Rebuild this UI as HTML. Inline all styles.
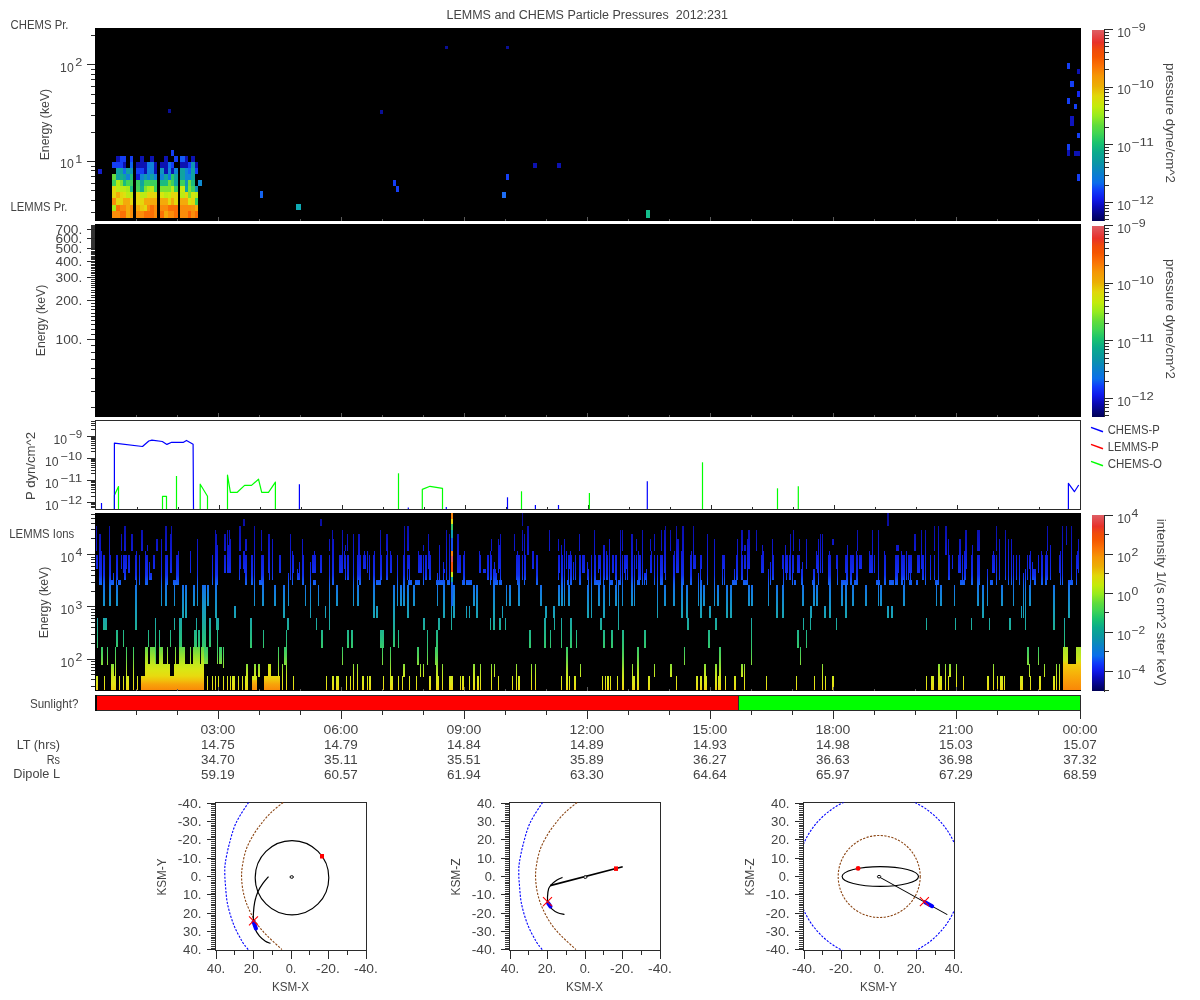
<!DOCTYPE html>
<html><head><meta charset="utf-8"><title>LEMMS and CHEMS Particle Pressures 2012:231</title>
<style>html,body{margin:0;padding:0;background:#fff;}svg{display:block;}text{font-family:"Liberation Sans",sans-serif;}</style></head><body>
<svg width="1200" height="1000" viewBox="0 0 1200 1000" shape-rendering="crispEdges">
<defs>
<linearGradient id="cb" x1="0" y1="0" x2="0" y2="1"><stop offset="0.000" stop-color="rgb(222,95,100)"/><stop offset="0.040" stop-color="rgb(228,65,65)"/><stop offset="0.065" stop-color="rgb(232,50,40)"/><stop offset="0.105" stop-color="rgb(240,75,10)"/><stop offset="0.140" stop-color="rgb(245,85,0)"/><stop offset="0.190" stop-color="rgb(250,115,5)"/><stop offset="0.240" stop-color="rgb(245,150,5)"/><stop offset="0.295" stop-color="rgb(235,175,5)"/><stop offset="0.345" stop-color="rgb(225,215,10)"/><stop offset="0.400" stop-color="rgb(195,235,10)"/><stop offset="0.450" stop-color="rgb(150,235,30)"/><stop offset="0.500" stop-color="rgb(95,220,60)"/><stop offset="0.540" stop-color="rgb(65,213,82)"/><stop offset="0.590" stop-color="rgb(25,195,110)"/><stop offset="0.640" stop-color="rgb(10,170,140)"/><stop offset="0.695" stop-color="rgb(10,150,165)"/><stop offset="0.745" stop-color="rgb(10,130,200)"/><stop offset="0.800" stop-color="rgb(10,110,235)"/><stop offset="0.840" stop-color="rgb(15,60,250)"/><stop offset="0.885" stop-color="rgb(15,25,235)"/><stop offset="0.925" stop-color="rgb(10,10,185)"/><stop offset="0.965" stop-color="rgb(5,5,130)"/><stop offset="1.000" stop-color="rgb(0,0,85)"/></linearGradient>
<linearGradient id="g4" gradientUnits="userSpaceOnUse" x1="0" y1="513" x2="0" y2="690"><stop offset="0.0000" stop-color="rgb(8,10,140)"/><stop offset="0.0734" stop-color="rgb(10,15,170)"/><stop offset="0.1525" stop-color="rgb(12,20,195)"/><stop offset="0.2373" stop-color="rgb(15,28,218)"/><stop offset="0.3503" stop-color="rgb(18,48,238)"/><stop offset="0.3785" stop-color="rgb(20,78,245)"/><stop offset="0.4068" stop-color="rgb(20,105,240)"/><stop offset="0.4350" stop-color="rgb(20,122,228)"/><stop offset="0.4915" stop-color="rgb(20,140,210)"/><stop offset="0.5254" stop-color="rgb(22,150,200)"/><stop offset="0.5593" stop-color="rgb(24,160,188)"/><stop offset="0.6271" stop-color="rgb(28,172,160)"/><stop offset="0.6723" stop-color="rgb(32,182,140)"/><stop offset="0.7175" stop-color="rgb(40,192,125)"/><stop offset="0.7627" stop-color="rgb(55,202,105)"/><stop offset="0.8079" stop-color="rgb(85,212,85)"/><stop offset="0.8531" stop-color="rgb(130,222,60)"/><stop offset="0.8870" stop-color="rgb(175,228,40)"/><stop offset="0.9209" stop-color="rgb(205,232,30)"/><stop offset="0.9661" stop-color="rgb(228,228,22)"/><stop offset="1.0000" stop-color="rgb(238,208,18)"/></linearGradient>
<linearGradient id="h4" gradientUnits="userSpaceOnUse" x1="0" y1="630" x2="0" y2="690"><stop offset="0.0000" stop-color="rgb(60,200,100)"/><stop offset="0.2833" stop-color="rgb(95,215,75)"/><stop offset="0.4333" stop-color="rgb(150,225,45)"/><stop offset="0.5667" stop-color="rgb(195,232,28)"/><stop offset="0.6667" stop-color="rgb(218,230,20)"/><stop offset="0.7667" stop-color="rgb(232,218,15)"/><stop offset="0.8333" stop-color="rgb(240,195,12)"/><stop offset="0.9000" stop-color="rgb(247,165,10)"/><stop offset="1.0000" stop-color="rgb(250,138,8)"/></linearGradient>
<linearGradient id="r4" gradientUnits="userSpaceOnUse" x1="0" y1="647" x2="0" y2="690"><stop offset="0.0000" stop-color="rgb(165,228,42)"/><stop offset="0.3023" stop-color="rgb(205,230,25)"/><stop offset="0.3953" stop-color="rgb(240,205,12)"/><stop offset="0.5814" stop-color="rgb(246,182,10)"/><stop offset="0.7674" stop-color="rgb(249,160,9)"/><stop offset="1.0000" stop-color="rgb(250,135,8)"/></linearGradient>
</defs>
<rect x="0" y="0" width="1200" height="1000" fill="#fff"/>
<rect x="95" y="28" width="986" height="193" fill="#000"/>
<rect x="91.00" y="212.00" width="4.00" height="1" fill="#2b2b2b"/>
<rect x="91.00" y="200.00" width="4.00" height="1" fill="#2b2b2b"/>
<rect x="91.00" y="190.00" width="4.00" height="1" fill="#2b2b2b"/>
<rect x="91.00" y="183.00" width="4.00" height="1" fill="#2b2b2b"/>
<rect x="91.00" y="176.00" width="4.00" height="1" fill="#2b2b2b"/>
<rect x="91.00" y="170.00" width="4.00" height="1" fill="#2b2b2b"/>
<rect x="91.00" y="166.00" width="4.00" height="1" fill="#2b2b2b"/>
<rect x="87.00" y="161.00" width="8.00" height="1" fill="#2b2b2b"/>
<rect x="91.00" y="132.00" width="4.00" height="1" fill="#2b2b2b"/>
<rect x="91.00" y="115.00" width="4.00" height="1" fill="#2b2b2b"/>
<rect x="91.00" y="103.00" width="4.00" height="1" fill="#2b2b2b"/>
<rect x="91.00" y="94.00" width="4.00" height="1" fill="#2b2b2b"/>
<rect x="91.00" y="86.00" width="4.00" height="1" fill="#2b2b2b"/>
<rect x="91.00" y="79.00" width="4.00" height="1" fill="#2b2b2b"/>
<rect x="91.00" y="74.00" width="4.00" height="1" fill="#2b2b2b"/>
<rect x="91.00" y="69.00" width="4.00" height="1" fill="#2b2b2b"/>
<rect x="87.00" y="64.00" width="8.00" height="1" fill="#2b2b2b"/>
<rect x="91.00" y="35.00" width="4.00" height="1" fill="#2b2b2b"/>
<rect x="136.00" y="219.00" width="1" height="2.00" fill="#5a5a5a"/>
<rect x="177.00" y="219.00" width="1" height="2.00" fill="#5a5a5a"/>
<rect x="218.00" y="217.00" width="1" height="4.00" fill="#5a5a5a"/>
<rect x="259.00" y="219.00" width="1" height="2.00" fill="#5a5a5a"/>
<rect x="300.00" y="219.00" width="1" height="2.00" fill="#5a5a5a"/>
<rect x="341.00" y="217.00" width="1" height="4.00" fill="#5a5a5a"/>
<rect x="382.00" y="219.00" width="1" height="2.00" fill="#5a5a5a"/>
<rect x="423.00" y="219.00" width="1" height="2.00" fill="#5a5a5a"/>
<rect x="464.00" y="217.00" width="1" height="4.00" fill="#5a5a5a"/>
<rect x="505.00" y="219.00" width="1" height="2.00" fill="#5a5a5a"/>
<rect x="546.00" y="219.00" width="1" height="2.00" fill="#5a5a5a"/>
<rect x="587.00" y="217.00" width="1" height="4.00" fill="#5a5a5a"/>
<rect x="628.00" y="219.00" width="1" height="2.00" fill="#5a5a5a"/>
<rect x="669.00" y="219.00" width="1" height="2.00" fill="#5a5a5a"/>
<rect x="710.00" y="217.00" width="1" height="4.00" fill="#5a5a5a"/>
<rect x="751.00" y="219.00" width="1" height="2.00" fill="#5a5a5a"/>
<rect x="792.00" y="219.00" width="1" height="2.00" fill="#5a5a5a"/>
<rect x="833.00" y="217.00" width="1" height="4.00" fill="#5a5a5a"/>
<rect x="874.00" y="219.00" width="1" height="2.00" fill="#5a5a5a"/>
<rect x="915.00" y="219.00" width="1" height="2.00" fill="#5a5a5a"/>
<rect x="956.00" y="217.00" width="1" height="4.00" fill="#5a5a5a"/>
<rect x="997.00" y="219.00" width="1" height="2.00" fill="#5a5a5a"/>
<rect x="1038.00" y="219.00" width="1" height="2.00" fill="#5a5a5a"/>
<rect x="112" y="211" width="4" height="7" fill="rgb(250,140,10)"/>
<rect x="116" y="211" width="4" height="7" fill="rgb(250,140,10)"/>
<rect x="120" y="211" width="3" height="7" fill="rgb(250,112,5)"/>
<rect x="123" y="211" width="3" height="7" fill="rgb(250,112,5)"/>
<rect x="126" y="211" width="4" height="7" fill="rgb(244,170,10)"/>
<rect x="130" y="211" width="3" height="7" fill="rgb(250,140,10)"/>
<rect x="112" y="205" width="4" height="6" fill="rgb(170,235,20)"/>
<rect x="116" y="205" width="4" height="6" fill="rgb(250,112,5)"/>
<rect x="120" y="205" width="3" height="6" fill="rgb(250,140,10)"/>
<rect x="123" y="205" width="3" height="6" fill="rgb(250,140,10)"/>
<rect x="126" y="205" width="4" height="6" fill="rgb(244,170,10)"/>
<rect x="130" y="205" width="3" height="6" fill="rgb(250,140,10)"/>
<rect x="112" y="198" width="4" height="7" fill="rgb(250,140,10)"/>
<rect x="116" y="198" width="4" height="7" fill="rgb(228,215,12)"/>
<rect x="120" y="198" width="3" height="7" fill="rgb(228,215,12)"/>
<rect x="123" y="198" width="3" height="7" fill="rgb(244,170,10)"/>
<rect x="126" y="198" width="4" height="7" fill="rgb(244,170,10)"/>
<rect x="130" y="198" width="3" height="7" fill="rgb(228,215,12)"/>
<rect x="112" y="192" width="4" height="6" fill="rgb(228,215,12)"/>
<rect x="116" y="192" width="4" height="6" fill="rgb(244,170,10)"/>
<rect x="120" y="192" width="3" height="6" fill="rgb(228,215,12)"/>
<rect x="123" y="192" width="3" height="6" fill="rgb(220,225,15)"/>
<rect x="126" y="192" width="4" height="6" fill="rgb(188,235,20)"/>
<rect x="130" y="192" width="3" height="6" fill="rgb(188,235,20)"/>
<rect x="112" y="186" width="4" height="6" fill="rgb(230,215,10)"/>
<rect x="116" y="186" width="4" height="6" fill="rgb(188,235,20)"/>
<rect x="120" y="186" width="3" height="6" fill="rgb(188,235,20)"/>
<rect x="123" y="186" width="3" height="6" fill="rgb(188,235,20)"/>
<rect x="126" y="186" width="4" height="6" fill="rgb(170,235,25)"/>
<rect x="130" y="186" width="3" height="6" fill="rgb(26,187,128)"/>
<rect x="112" y="180" width="4" height="6" fill="rgb(60,208,92)"/>
<rect x="116" y="180" width="4" height="6" fill="rgb(180,235,20)"/>
<rect x="120" y="180" width="3" height="6" fill="rgb(125,226,48)"/>
<rect x="123" y="180" width="3" height="6" fill="rgb(26,187,128)"/>
<rect x="126" y="180" width="4" height="6" fill="rgb(70,215,80)"/>
<rect x="130" y="180" width="3" height="6" fill="rgb(60,208,92)"/>
<rect x="112" y="174" width="4" height="6" fill="rgb(100,220,60)"/>
<rect x="116" y="174" width="4" height="6" fill="rgb(16,163,160)"/>
<rect x="120" y="174" width="3" height="6" fill="rgb(20,175,140)"/>
<rect x="123" y="174" width="3" height="6" fill="rgb(16,163,160)"/>
<rect x="126" y="174" width="4" height="6" fill="rgb(15,132,215)"/>
<rect x="130" y="174" width="3" height="6" fill="rgb(26,187,128)"/>
<rect x="116" y="168" width="4" height="6" fill="rgb(16,163,160)"/>
<rect x="120" y="168" width="3" height="6" fill="rgb(16,163,160)"/>
<rect x="123" y="168" width="3" height="6" fill="rgb(20,110,235)"/>
<rect x="126" y="168" width="4" height="6" fill="rgb(16,163,160)"/>
<rect x="130" y="168" width="3" height="6" fill="rgb(15,150,185)"/>
<rect x="112" y="162" width="4" height="6" fill="rgb(20,62,245)"/>
<rect x="116" y="162" width="4" height="6" fill="rgb(20,62,245)"/>
<rect x="120" y="162" width="3" height="6" fill="rgb(20,62,245)"/>
<rect x="123" y="162" width="3" height="6" fill="rgb(12,18,178)"/>
<rect x="130" y="162" width="3" height="6" fill="rgb(15,100,240)"/>
<rect x="116" y="156" width="4" height="6" fill="rgb(12,18,178)"/>
<rect x="120" y="156" width="3" height="6" fill="rgb(20,62,245)"/>
<rect x="123" y="156" width="3" height="6" fill="rgb(20,62,245)"/>
<rect x="130" y="156" width="3" height="6" fill="rgb(20,62,245)"/>
<rect x="136" y="211" width="4" height="7" fill="rgb(250,140,10)"/>
<rect x="140" y="211" width="4" height="7" fill="rgb(250,140,10)"/>
<rect x="144" y="211" width="3" height="7" fill="rgb(250,112,5)"/>
<rect x="147" y="211" width="3" height="7" fill="rgb(250,112,5)"/>
<rect x="150" y="211" width="4" height="7" fill="rgb(250,112,5)"/>
<rect x="154" y="211" width="3" height="7" fill="rgb(250,140,10)"/>
<rect x="136" y="205" width="4" height="6" fill="rgb(244,170,10)"/>
<rect x="140" y="205" width="4" height="6" fill="rgb(235,200,10)"/>
<rect x="144" y="205" width="3" height="6" fill="rgb(228,215,12)"/>
<rect x="147" y="205" width="3" height="6" fill="rgb(250,140,10)"/>
<rect x="150" y="205" width="4" height="6" fill="rgb(250,112,5)"/>
<rect x="154" y="205" width="3" height="6" fill="rgb(250,140,10)"/>
<rect x="136" y="198" width="4" height="7" fill="rgb(228,215,12)"/>
<rect x="140" y="198" width="4" height="7" fill="rgb(228,215,12)"/>
<rect x="144" y="198" width="3" height="7" fill="rgb(244,170,10)"/>
<rect x="147" y="198" width="3" height="7" fill="rgb(244,170,10)"/>
<rect x="150" y="198" width="4" height="7" fill="rgb(244,170,10)"/>
<rect x="154" y="198" width="3" height="7" fill="rgb(244,170,10)"/>
<rect x="136" y="192" width="4" height="6" fill="rgb(228,215,12)"/>
<rect x="140" y="192" width="4" height="6" fill="rgb(188,235,20)"/>
<rect x="144" y="192" width="3" height="6" fill="rgb(188,235,20)"/>
<rect x="147" y="192" width="3" height="6" fill="rgb(228,215,12)"/>
<rect x="150" y="192" width="4" height="6" fill="rgb(228,215,12)"/>
<rect x="154" y="192" width="3" height="6" fill="rgb(228,215,12)"/>
<rect x="136" y="186" width="4" height="6" fill="rgb(70,210,85)"/>
<rect x="140" y="186" width="4" height="6" fill="rgb(20,175,140)"/>
<rect x="144" y="186" width="3" height="6" fill="rgb(125,226,48)"/>
<rect x="147" y="186" width="3" height="6" fill="rgb(170,235,25)"/>
<rect x="150" y="186" width="4" height="6" fill="rgb(188,235,20)"/>
<rect x="154" y="186" width="3" height="6" fill="rgb(60,208,92)"/>
<rect x="136" y="180" width="4" height="6" fill="rgb(60,208,92)"/>
<rect x="140" y="180" width="4" height="6" fill="rgb(16,163,160)"/>
<rect x="144" y="180" width="3" height="6" fill="rgb(60,208,92)"/>
<rect x="147" y="180" width="3" height="6" fill="rgb(60,208,92)"/>
<rect x="150" y="180" width="4" height="6" fill="rgb(60,208,92)"/>
<rect x="154" y="180" width="3" height="6" fill="rgb(60,208,92)"/>
<rect x="136" y="174" width="4" height="6" fill="rgb(15,25,215)"/>
<rect x="140" y="174" width="4" height="6" fill="rgb(15,132,215)"/>
<rect x="144" y="174" width="3" height="6" fill="rgb(15,155,175)"/>
<rect x="147" y="174" width="3" height="6" fill="rgb(15,132,215)"/>
<rect x="150" y="174" width="4" height="6" fill="rgb(16,163,160)"/>
<rect x="154" y="174" width="3" height="6" fill="rgb(15,132,215)"/>
<rect x="136" y="168" width="4" height="6" fill="rgb(20,62,245)"/>
<rect x="140" y="168" width="4" height="6" fill="rgb(20,62,245)"/>
<rect x="144" y="168" width="3" height="6" fill="rgb(12,18,178)"/>
<rect x="147" y="168" width="3" height="6" fill="rgb(15,130,220)"/>
<rect x="150" y="168" width="4" height="6" fill="rgb(15,132,215)"/>
<rect x="154" y="168" width="3" height="6" fill="rgb(12,18,178)"/>
<rect x="136" y="162" width="4" height="6" fill="rgb(12,18,178)"/>
<rect x="140" y="162" width="4" height="6" fill="rgb(12,18,178)"/>
<rect x="144" y="162" width="3" height="6" fill="rgb(12,18,178)"/>
<rect x="147" y="162" width="3" height="6" fill="rgb(15,120,230)"/>
<rect x="150" y="162" width="4" height="6" fill="rgb(15,132,215)"/>
<rect x="154" y="162" width="3" height="6" fill="rgb(12,18,178)"/>
<rect x="140" y="156" width="4" height="6" fill="rgb(12,18,178)"/>
<rect x="150" y="156" width="4" height="6" fill="rgb(12,18,178)"/>
<rect x="160" y="211" width="4" height="7" fill="rgb(250,112,5)"/>
<rect x="164" y="211" width="4" height="7" fill="rgb(244,170,10)"/>
<rect x="168" y="211" width="3" height="7" fill="rgb(250,140,10)"/>
<rect x="171" y="211" width="3" height="7" fill="rgb(250,140,10)"/>
<rect x="174" y="211" width="4" height="7" fill="rgb(250,112,5)"/>
<rect x="160" y="205" width="4" height="6" fill="rgb(250,140,10)"/>
<rect x="164" y="205" width="4" height="6" fill="rgb(250,140,10)"/>
<rect x="168" y="205" width="3" height="6" fill="rgb(250,112,5)"/>
<rect x="171" y="205" width="3" height="6" fill="rgb(250,112,5)"/>
<rect x="174" y="205" width="4" height="6" fill="rgb(250,112,5)"/>
<rect x="160" y="198" width="4" height="7" fill="rgb(244,170,10)"/>
<rect x="164" y="198" width="4" height="7" fill="rgb(244,170,10)"/>
<rect x="168" y="198" width="3" height="7" fill="rgb(228,215,12)"/>
<rect x="171" y="198" width="3" height="7" fill="rgb(244,170,10)"/>
<rect x="174" y="198" width="4" height="7" fill="rgb(228,215,12)"/>
<rect x="160" y="192" width="4" height="6" fill="rgb(215,230,15)"/>
<rect x="164" y="192" width="4" height="6" fill="rgb(188,235,20)"/>
<rect x="168" y="192" width="3" height="6" fill="rgb(200,235,15)"/>
<rect x="171" y="192" width="3" height="6" fill="rgb(228,215,12)"/>
<rect x="174" y="192" width="4" height="6" fill="rgb(228,215,12)"/>
<rect x="160" y="186" width="4" height="6" fill="rgb(125,226,48)"/>
<rect x="164" y="186" width="4" height="6" fill="rgb(125,226,48)"/>
<rect x="168" y="186" width="3" height="6" fill="rgb(125,226,48)"/>
<rect x="171" y="186" width="3" height="6" fill="rgb(188,235,20)"/>
<rect x="174" y="186" width="4" height="6" fill="rgb(60,208,92)"/>
<rect x="160" y="180" width="4" height="6" fill="rgb(26,187,128)"/>
<rect x="164" y="180" width="4" height="6" fill="rgb(26,187,128)"/>
<rect x="168" y="180" width="3" height="6" fill="rgb(110,220,55)"/>
<rect x="171" y="180" width="3" height="6" fill="rgb(60,208,92)"/>
<rect x="174" y="180" width="4" height="6" fill="rgb(16,163,160)"/>
<rect x="160" y="174" width="4" height="6" fill="rgb(15,132,215)"/>
<rect x="164" y="174" width="4" height="6" fill="rgb(16,163,160)"/>
<rect x="168" y="174" width="3" height="6" fill="rgb(15,120,225)"/>
<rect x="171" y="174" width="3" height="6" fill="rgb(40,200,105)"/>
<rect x="174" y="174" width="4" height="6" fill="rgb(16,163,160)"/>
<rect x="160" y="168" width="4" height="6" fill="rgb(15,150,190)"/>
<rect x="164" y="168" width="4" height="6" fill="rgb(12,18,178)"/>
<rect x="168" y="168" width="3" height="6" fill="rgb(15,132,215)"/>
<rect x="171" y="168" width="3" height="6" fill="rgb(12,18,178)"/>
<rect x="174" y="168" width="4" height="6" fill="rgb(15,130,215)"/>
<rect x="160" y="162" width="4" height="6" fill="rgb(12,18,178)"/>
<rect x="164" y="162" width="4" height="6" fill="rgb(12,18,178)"/>
<rect x="168" y="162" width="3" height="6" fill="rgb(15,115,230)"/>
<rect x="171" y="162" width="3" height="6" fill="rgb(20,62,245)"/>
<rect x="164" y="156" width="4" height="6" fill="rgb(12,18,178)"/>
<rect x="174" y="156" width="4" height="6" fill="rgb(20,62,245)"/>
<rect x="171" y="150" width="3" height="6" fill="rgb(20,62,245)"/>
<rect x="180" y="211" width="5" height="7" fill="rgb(250,140,10)"/>
<rect x="185" y="211" width="3" height="7" fill="rgb(250,140,10)"/>
<rect x="188" y="211" width="3" height="7" fill="rgb(250,100,5)"/>
<rect x="191" y="211" width="4" height="7" fill="rgb(250,140,10)"/>
<rect x="195" y="211" width="3" height="7" fill="rgb(250,112,5)"/>
<rect x="180" y="205" width="5" height="6" fill="rgb(250,140,10)"/>
<rect x="185" y="205" width="3" height="6" fill="rgb(250,140,10)"/>
<rect x="188" y="205" width="3" height="6" fill="rgb(250,140,10)"/>
<rect x="191" y="205" width="4" height="6" fill="rgb(245,150,10)"/>
<rect x="195" y="205" width="3" height="6" fill="rgb(244,170,10)"/>
<rect x="180" y="198" width="5" height="7" fill="rgb(244,170,10)"/>
<rect x="185" y="198" width="3" height="7" fill="rgb(244,170,10)"/>
<rect x="188" y="198" width="3" height="7" fill="rgb(215,230,15)"/>
<rect x="191" y="198" width="4" height="7" fill="rgb(228,215,12)"/>
<rect x="195" y="198" width="3" height="7" fill="rgb(60,208,92)"/>
<rect x="180" y="192" width="5" height="6" fill="rgb(188,235,20)"/>
<rect x="185" y="192" width="3" height="6" fill="rgb(228,215,12)"/>
<rect x="188" y="192" width="3" height="6" fill="rgb(125,226,48)"/>
<rect x="191" y="192" width="4" height="6" fill="rgb(210,230,15)"/>
<rect x="195" y="192" width="3" height="6" fill="rgb(188,235,20)"/>
<rect x="180" y="186" width="5" height="6" fill="rgb(200,235,15)"/>
<rect x="185" y="186" width="3" height="6" fill="rgb(16,163,160)"/>
<rect x="188" y="186" width="3" height="6" fill="rgb(125,226,48)"/>
<rect x="191" y="186" width="4" height="6" fill="rgb(60,208,92)"/>
<rect x="195" y="186" width="3" height="6" fill="rgb(15,150,180)"/>
<rect x="180" y="180" width="5" height="6" fill="rgb(60,208,92)"/>
<rect x="185" y="180" width="3" height="6" fill="rgb(15,150,180)"/>
<rect x="188" y="180" width="3" height="6" fill="rgb(110,220,55)"/>
<rect x="191" y="180" width="4" height="6" fill="rgb(26,187,128)"/>
<rect x="198" y="180" width="4" height="6" fill="rgb(15,140,210)"/>
<rect x="180" y="174" width="5" height="6" fill="rgb(16,163,160)"/>
<rect x="185" y="174" width="3" height="6" fill="rgb(15,132,215)"/>
<rect x="188" y="174" width="3" height="6" fill="rgb(15,132,215)"/>
<rect x="191" y="174" width="4" height="6" fill="rgb(16,163,160)"/>
<rect x="180" y="168" width="5" height="6" fill="rgb(16,163,160)"/>
<rect x="185" y="168" width="3" height="6" fill="rgb(15,132,215)"/>
<rect x="188" y="168" width="3" height="6" fill="rgb(20,100,240)"/>
<rect x="191" y="168" width="4" height="6" fill="rgb(16,163,160)"/>
<rect x="195" y="168" width="3" height="6" fill="rgb(20,62,245)"/>
<rect x="180" y="162" width="5" height="6" fill="rgb(12,18,178)"/>
<rect x="185" y="162" width="3" height="6" fill="rgb(12,18,178)"/>
<rect x="188" y="162" width="3" height="6" fill="rgb(20,62,245)"/>
<rect x="191" y="162" width="4" height="6" fill="rgb(15,150,180)"/>
<rect x="195" y="162" width="3" height="6" fill="rgb(12,18,178)"/>
<rect x="180" y="156" width="5" height="6" fill="rgb(20,90,245)"/>
<rect x="185" y="156" width="3" height="6" fill="rgb(12,18,178)"/>
<rect x="191" y="156" width="4" height="6" fill="rgb(12,18,178)"/>
<rect x="98" y="169" width="4" height="5" fill="rgb(20,30,200)"/>
<rect x="168" y="109" width="3" height="4" fill="rgb(10,15,150)"/>
<rect x="260" y="191" width="3" height="7" fill="rgb(20,100,240)"/>
<rect x="296" y="204" width="5" height="6" fill="rgb(15,170,180)"/>
<rect x="380" y="110" width="3" height="4" fill="rgb(10,15,150)"/>
<rect x="393" y="180" width="3" height="6" fill="rgb(20,62,245)"/>
<rect x="396" y="186" width="3" height="6" fill="rgb(20,62,245)"/>
<rect x="445" y="46" width="3" height="3" fill="rgb(10,15,150)"/>
<rect x="506" y="46" width="3" height="3" fill="rgb(10,15,150)"/>
<rect x="506" y="174" width="3" height="6" fill="rgb(20,62,245)"/>
<rect x="502" y="192" width="4" height="6" fill="rgb(30,110,245)"/>
<rect x="533" y="163" width="4" height="5" fill="rgb(12,18,178)"/>
<rect x="557" y="163" width="4" height="5" fill="rgb(12,18,178)"/>
<rect x="646" y="210" width="4" height="8" fill="rgb(20,190,140)"/>
<rect x="1067" y="63" width="3" height="6" fill="rgb(20,62,245)"/>
<rect x="1077" y="69" width="3" height="5" fill="rgb(12,18,178)"/>
<rect x="1070" y="81" width="4" height="6" fill="rgb(20,62,245)"/>
<rect x="1077" y="91" width="3" height="6" fill="rgb(20,40,240)"/>
<rect x="1067" y="98" width="3" height="6" fill="rgb(20,62,245)"/>
<rect x="1074" y="104" width="3" height="5" fill="rgb(20,62,245)"/>
<rect x="1070" y="116" width="4" height="10" fill="rgb(15,20,190)"/>
<rect x="1077" y="133" width="3" height="5" fill="rgb(20,62,245)"/>
<rect x="1067" y="144" width="3" height="6" fill="rgb(20,62,245)"/>
<rect x="1067" y="150" width="3" height="6" fill="rgb(12,18,178)"/>
<rect x="1074" y="151" width="6" height="5" fill="rgb(12,18,178)"/>
<rect x="1077" y="174" width="3" height="7" fill="rgb(20,62,245)"/>
<rect x="1092" y="30" width="12.5" height="191" fill="url(#cb)"/>
<rect x="1104.00" y="29.00" width="1" height="192.00" fill="#2b2b2b"/>
<rect x="1105.00" y="29.00" width="8.00" height="1" fill="#2b2b2b"/>
<rect x="1105.00" y="69.00" width="4.00" height="1" fill="#2b2b2b"/>
<rect x="1105.00" y="59.00" width="4.00" height="1" fill="#2b2b2b"/>
<rect x="1105.00" y="52.00" width="4.00" height="1" fill="#2b2b2b"/>
<rect x="1105.00" y="46.00" width="4.00" height="1" fill="#2b2b2b"/>
<rect x="1105.00" y="42.00" width="4.00" height="1" fill="#2b2b2b"/>
<rect x="1105.00" y="38.00" width="4.00" height="1" fill="#2b2b2b"/>
<rect x="1105.00" y="35.00" width="4.00" height="1" fill="#2b2b2b"/>
<rect x="1105.00" y="32.00" width="4.00" height="1" fill="#2b2b2b"/>
<rect x="1105.00" y="87.00" width="8.00" height="1" fill="#2b2b2b"/>
<rect x="1105.00" y="127.00" width="4.00" height="1" fill="#2b2b2b"/>
<rect x="1105.00" y="117.00" width="4.00" height="1" fill="#2b2b2b"/>
<rect x="1105.00" y="110.00" width="4.00" height="1" fill="#2b2b2b"/>
<rect x="1105.00" y="104.00" width="4.00" height="1" fill="#2b2b2b"/>
<rect x="1105.00" y="100.00" width="4.00" height="1" fill="#2b2b2b"/>
<rect x="1105.00" y="96.00" width="4.00" height="1" fill="#2b2b2b"/>
<rect x="1105.00" y="92.00" width="4.00" height="1" fill="#2b2b2b"/>
<rect x="1105.00" y="89.00" width="4.00" height="1" fill="#2b2b2b"/>
<rect x="1105.00" y="144.00" width="8.00" height="1" fill="#2b2b2b"/>
<rect x="1105.00" y="185.00" width="4.00" height="1" fill="#2b2b2b"/>
<rect x="1105.00" y="175.00" width="4.00" height="1" fill="#2b2b2b"/>
<rect x="1105.00" y="167.00" width="4.00" height="1" fill="#2b2b2b"/>
<rect x="1105.00" y="162.00" width="4.00" height="1" fill="#2b2b2b"/>
<rect x="1105.00" y="157.00" width="4.00" height="1" fill="#2b2b2b"/>
<rect x="1105.00" y="153.00" width="4.00" height="1" fill="#2b2b2b"/>
<rect x="1105.00" y="150.00" width="4.00" height="1" fill="#2b2b2b"/>
<rect x="1105.00" y="147.00" width="4.00" height="1" fill="#2b2b2b"/>
<rect x="1105.00" y="202.00" width="8.00" height="1" fill="#2b2b2b"/>
<rect x="1105.00" y="219.00" width="4.00" height="1" fill="#2b2b2b"/>
<rect x="1105.00" y="215.00" width="4.00" height="1" fill="#2b2b2b"/>
<rect x="1105.00" y="211.00" width="4.00" height="1" fill="#2b2b2b"/>
<rect x="1105.00" y="208.00" width="4.00" height="1" fill="#2b2b2b"/>
<rect x="1105.00" y="205.00" width="4.00" height="1" fill="#2b2b2b"/>
<rect x="1092" y="226" width="12.5" height="191" fill="url(#cb)"/>
<rect x="1104.00" y="225.00" width="1" height="192.00" fill="#2b2b2b"/>
<rect x="1105.00" y="225.00" width="8.00" height="1" fill="#2b2b2b"/>
<rect x="1105.00" y="265.00" width="4.00" height="1" fill="#2b2b2b"/>
<rect x="1105.00" y="255.00" width="4.00" height="1" fill="#2b2b2b"/>
<rect x="1105.00" y="248.00" width="4.00" height="1" fill="#2b2b2b"/>
<rect x="1105.00" y="242.00" width="4.00" height="1" fill="#2b2b2b"/>
<rect x="1105.00" y="238.00" width="4.00" height="1" fill="#2b2b2b"/>
<rect x="1105.00" y="234.00" width="4.00" height="1" fill="#2b2b2b"/>
<rect x="1105.00" y="231.00" width="4.00" height="1" fill="#2b2b2b"/>
<rect x="1105.00" y="228.00" width="4.00" height="1" fill="#2b2b2b"/>
<rect x="1105.00" y="283.00" width="8.00" height="1" fill="#2b2b2b"/>
<rect x="1105.00" y="323.00" width="4.00" height="1" fill="#2b2b2b"/>
<rect x="1105.00" y="313.00" width="4.00" height="1" fill="#2b2b2b"/>
<rect x="1105.00" y="306.00" width="4.00" height="1" fill="#2b2b2b"/>
<rect x="1105.00" y="300.00" width="4.00" height="1" fill="#2b2b2b"/>
<rect x="1105.00" y="296.00" width="4.00" height="1" fill="#2b2b2b"/>
<rect x="1105.00" y="292.00" width="4.00" height="1" fill="#2b2b2b"/>
<rect x="1105.00" y="288.00" width="4.00" height="1" fill="#2b2b2b"/>
<rect x="1105.00" y="285.00" width="4.00" height="1" fill="#2b2b2b"/>
<rect x="1105.00" y="340.00" width="8.00" height="1" fill="#2b2b2b"/>
<rect x="1105.00" y="381.00" width="4.00" height="1" fill="#2b2b2b"/>
<rect x="1105.00" y="371.00" width="4.00" height="1" fill="#2b2b2b"/>
<rect x="1105.00" y="363.00" width="4.00" height="1" fill="#2b2b2b"/>
<rect x="1105.00" y="358.00" width="4.00" height="1" fill="#2b2b2b"/>
<rect x="1105.00" y="353.00" width="4.00" height="1" fill="#2b2b2b"/>
<rect x="1105.00" y="349.00" width="4.00" height="1" fill="#2b2b2b"/>
<rect x="1105.00" y="346.00" width="4.00" height="1" fill="#2b2b2b"/>
<rect x="1105.00" y="343.00" width="4.00" height="1" fill="#2b2b2b"/>
<rect x="1105.00" y="398.00" width="8.00" height="1" fill="#2b2b2b"/>
<rect x="1105.00" y="415.00" width="4.00" height="1" fill="#2b2b2b"/>
<rect x="1105.00" y="411.00" width="4.00" height="1" fill="#2b2b2b"/>
<rect x="1105.00" y="407.00" width="4.00" height="1" fill="#2b2b2b"/>
<rect x="1105.00" y="404.00" width="4.00" height="1" fill="#2b2b2b"/>
<rect x="1105.00" y="401.00" width="4.00" height="1" fill="#2b2b2b"/>
<rect x="95" y="224" width="986" height="192.7" fill="#000"/>
<rect x="91" y="225" width="4" height="24" fill="#333"/>
<rect x="91.00" y="407.00" width="4.00" height="1" fill="#2b2b2b"/>
<rect x="91.00" y="391.00" width="4.00" height="1" fill="#2b2b2b"/>
<rect x="91.00" y="378.00" width="4.00" height="1" fill="#2b2b2b"/>
<rect x="91.00" y="368.00" width="4.00" height="1" fill="#2b2b2b"/>
<rect x="91.00" y="359.00" width="4.00" height="1" fill="#2b2b2b"/>
<rect x="91.00" y="352.00" width="4.00" height="1" fill="#2b2b2b"/>
<rect x="91.00" y="345.00" width="4.00" height="1" fill="#2b2b2b"/>
<rect x="87.00" y="339.00" width="8.00" height="1" fill="#2b2b2b"/>
<rect x="91.00" y="334.00" width="4.00" height="1" fill="#2b2b2b"/>
<rect x="91.00" y="329.00" width="4.00" height="1" fill="#2b2b2b"/>
<rect x="91.00" y="324.00" width="4.00" height="1" fill="#2b2b2b"/>
<rect x="91.00" y="320.00" width="4.00" height="1" fill="#2b2b2b"/>
<rect x="91.00" y="316.00" width="4.00" height="1" fill="#2b2b2b"/>
<rect x="91.00" y="313.00" width="4.00" height="1" fill="#2b2b2b"/>
<rect x="91.00" y="309.00" width="4.00" height="1" fill="#2b2b2b"/>
<rect x="91.00" y="306.00" width="4.00" height="1" fill="#2b2b2b"/>
<rect x="91.00" y="303.00" width="4.00" height="1" fill="#2b2b2b"/>
<rect x="87.00" y="300.00" width="8.00" height="1" fill="#2b2b2b"/>
<rect x="91.00" y="297.00" width="4.00" height="1" fill="#2b2b2b"/>
<rect x="91.00" y="295.00" width="4.00" height="1" fill="#2b2b2b"/>
<rect x="91.00" y="292.00" width="4.00" height="1" fill="#2b2b2b"/>
<rect x="91.00" y="290.00" width="4.00" height="1" fill="#2b2b2b"/>
<rect x="91.00" y="287.00" width="4.00" height="1" fill="#2b2b2b"/>
<rect x="91.00" y="285.00" width="4.00" height="1" fill="#2b2b2b"/>
<rect x="91.00" y="283.00" width="4.00" height="1" fill="#2b2b2b"/>
<rect x="91.00" y="281.00" width="4.00" height="1" fill="#2b2b2b"/>
<rect x="91.00" y="279.00" width="4.00" height="1" fill="#2b2b2b"/>
<rect x="87.00" y="277.00" width="8.00" height="1" fill="#2b2b2b"/>
<rect x="91.00" y="275.00" width="4.00" height="1" fill="#2b2b2b"/>
<rect x="91.00" y="273.00" width="4.00" height="1" fill="#2b2b2b"/>
<rect x="91.00" y="272.00" width="4.00" height="1" fill="#2b2b2b"/>
<rect x="91.00" y="270.00" width="4.00" height="1" fill="#2b2b2b"/>
<rect x="91.00" y="268.00" width="4.00" height="1" fill="#2b2b2b"/>
<rect x="91.00" y="267.00" width="4.00" height="1" fill="#2b2b2b"/>
<rect x="91.00" y="265.00" width="4.00" height="1" fill="#2b2b2b"/>
<rect x="91.00" y="264.00" width="4.00" height="1" fill="#2b2b2b"/>
<rect x="91.00" y="262.00" width="4.00" height="1" fill="#2b2b2b"/>
<rect x="87.00" y="261.00" width="8.00" height="1" fill="#2b2b2b"/>
<rect x="91.00" y="259.00" width="4.00" height="1" fill="#2b2b2b"/>
<rect x="91.00" y="258.00" width="4.00" height="1" fill="#2b2b2b"/>
<rect x="91.00" y="257.00" width="4.00" height="1" fill="#2b2b2b"/>
<rect x="91.00" y="256.00" width="4.00" height="1" fill="#2b2b2b"/>
<rect x="91.00" y="254.00" width="4.00" height="1" fill="#2b2b2b"/>
<rect x="91.00" y="253.00" width="4.00" height="1" fill="#2b2b2b"/>
<rect x="91.00" y="252.00" width="4.00" height="1" fill="#2b2b2b"/>
<rect x="91.00" y="251.00" width="4.00" height="1" fill="#2b2b2b"/>
<rect x="91.00" y="249.00" width="4.00" height="1" fill="#2b2b2b"/>
<rect x="87.00" y="248.00" width="8.00" height="1" fill="#2b2b2b"/>
<rect x="87.00" y="238.00" width="8.00" height="1" fill="#2b2b2b"/>
<rect x="87.00" y="229.00" width="8.00" height="1" fill="#2b2b2b"/>
<rect x="136.00" y="414.70" width="1" height="2.00" fill="#5a5a5a"/>
<rect x="177.00" y="414.70" width="1" height="2.00" fill="#5a5a5a"/>
<rect x="218.00" y="412.70" width="1" height="4.00" fill="#5a5a5a"/>
<rect x="259.00" y="414.70" width="1" height="2.00" fill="#5a5a5a"/>
<rect x="300.00" y="414.70" width="1" height="2.00" fill="#5a5a5a"/>
<rect x="341.00" y="412.70" width="1" height="4.00" fill="#5a5a5a"/>
<rect x="382.00" y="414.70" width="1" height="2.00" fill="#5a5a5a"/>
<rect x="423.00" y="414.70" width="1" height="2.00" fill="#5a5a5a"/>
<rect x="464.00" y="412.70" width="1" height="4.00" fill="#5a5a5a"/>
<rect x="505.00" y="414.70" width="1" height="2.00" fill="#5a5a5a"/>
<rect x="546.00" y="414.70" width="1" height="2.00" fill="#5a5a5a"/>
<rect x="587.00" y="412.70" width="1" height="4.00" fill="#5a5a5a"/>
<rect x="628.00" y="414.70" width="1" height="2.00" fill="#5a5a5a"/>
<rect x="669.00" y="414.70" width="1" height="2.00" fill="#5a5a5a"/>
<rect x="710.00" y="412.70" width="1" height="4.00" fill="#5a5a5a"/>
<rect x="751.00" y="414.70" width="1" height="2.00" fill="#5a5a5a"/>
<rect x="792.00" y="414.70" width="1" height="2.00" fill="#5a5a5a"/>
<rect x="833.00" y="412.70" width="1" height="4.00" fill="#5a5a5a"/>
<rect x="874.00" y="414.70" width="1" height="2.00" fill="#5a5a5a"/>
<rect x="915.00" y="414.70" width="1" height="2.00" fill="#5a5a5a"/>
<rect x="956.00" y="412.70" width="1" height="4.00" fill="#5a5a5a"/>
<rect x="997.00" y="414.70" width="1" height="2.00" fill="#5a5a5a"/>
<rect x="1038.00" y="414.70" width="1" height="2.00" fill="#5a5a5a"/>
<rect x="95.5" y="420.5" width="985" height="89" fill="#fff" stroke="#2b2b2b" stroke-width="1"/>
<rect x="87.00" y="436.00" width="8.00" height="1" fill="#2b2b2b"/>
<rect x="87.00" y="458.00" width="8.00" height="1" fill="#2b2b2b"/>
<rect x="87.00" y="480.00" width="8.00" height="1" fill="#2b2b2b"/>
<rect x="87.00" y="502.00" width="8.00" height="1" fill="#2b2b2b"/>
<rect x="91.00" y="429.00" width="4.00" height="1" fill="#2b2b2b"/>
<rect x="91.00" y="425.00" width="4.00" height="1" fill="#2b2b2b"/>
<rect x="91.00" y="423.00" width="4.00" height="1" fill="#2b2b2b"/>
<rect x="91.00" y="421.00" width="4.00" height="1" fill="#2b2b2b"/>
<rect x="91.00" y="451.00" width="4.00" height="1" fill="#2b2b2b"/>
<rect x="91.00" y="448.00" width="4.00" height="1" fill="#2b2b2b"/>
<rect x="91.00" y="445.00" width="4.00" height="1" fill="#2b2b2b"/>
<rect x="91.00" y="443.00" width="4.00" height="1" fill="#2b2b2b"/>
<rect x="91.00" y="441.00" width="4.00" height="1" fill="#2b2b2b"/>
<rect x="91.00" y="439.00" width="4.00" height="1" fill="#2b2b2b"/>
<rect x="91.00" y="438.00" width="4.00" height="1" fill="#2b2b2b"/>
<rect x="91.00" y="437.00" width="4.00" height="1" fill="#2b2b2b"/>
<rect x="91.00" y="473.00" width="4.00" height="1" fill="#2b2b2b"/>
<rect x="91.00" y="470.00" width="4.00" height="1" fill="#2b2b2b"/>
<rect x="91.00" y="467.00" width="4.00" height="1" fill="#2b2b2b"/>
<rect x="91.00" y="465.00" width="4.00" height="1" fill="#2b2b2b"/>
<rect x="91.00" y="463.00" width="4.00" height="1" fill="#2b2b2b"/>
<rect x="91.00" y="461.00" width="4.00" height="1" fill="#2b2b2b"/>
<rect x="91.00" y="460.00" width="4.00" height="1" fill="#2b2b2b"/>
<rect x="91.00" y="459.00" width="4.00" height="1" fill="#2b2b2b"/>
<rect x="91.00" y="496.00" width="4.00" height="1" fill="#2b2b2b"/>
<rect x="91.00" y="492.00" width="4.00" height="1" fill="#2b2b2b"/>
<rect x="91.00" y="489.00" width="4.00" height="1" fill="#2b2b2b"/>
<rect x="91.00" y="487.00" width="4.00" height="1" fill="#2b2b2b"/>
<rect x="91.00" y="485.00" width="4.00" height="1" fill="#2b2b2b"/>
<rect x="91.00" y="484.00" width="4.00" height="1" fill="#2b2b2b"/>
<rect x="91.00" y="482.00" width="4.00" height="1" fill="#2b2b2b"/>
<rect x="91.00" y="481.00" width="4.00" height="1" fill="#2b2b2b"/>
<rect x="91.00" y="507.00" width="4.00" height="1" fill="#2b2b2b"/>
<rect x="91.00" y="506.00" width="4.00" height="1" fill="#2b2b2b"/>
<rect x="91.00" y="504.00" width="4.00" height="1" fill="#2b2b2b"/>
<rect x="91.00" y="503.00" width="4.00" height="1" fill="#2b2b2b"/>
<rect x="137.00" y="507.00" width="1" height="2.00" fill="#2b2b2b"/>
<rect x="178.00" y="507.00" width="1" height="2.00" fill="#2b2b2b"/>
<rect x="219.00" y="505.00" width="1" height="4.00" fill="#2b2b2b"/>
<rect x="260.00" y="507.00" width="1" height="2.00" fill="#2b2b2b"/>
<rect x="301.00" y="507.00" width="1" height="2.00" fill="#2b2b2b"/>
<rect x="342.00" y="505.00" width="1" height="4.00" fill="#2b2b2b"/>
<rect x="383.00" y="507.00" width="1" height="2.00" fill="#2b2b2b"/>
<rect x="424.00" y="507.00" width="1" height="2.00" fill="#2b2b2b"/>
<rect x="465.00" y="505.00" width="1" height="4.00" fill="#2b2b2b"/>
<rect x="506.00" y="507.00" width="1" height="2.00" fill="#2b2b2b"/>
<rect x="547.00" y="507.00" width="1" height="2.00" fill="#2b2b2b"/>
<rect x="588.00" y="505.00" width="1" height="4.00" fill="#2b2b2b"/>
<rect x="629.00" y="507.00" width="1" height="2.00" fill="#2b2b2b"/>
<rect x="670.00" y="507.00" width="1" height="2.00" fill="#2b2b2b"/>
<rect x="711.00" y="505.00" width="1" height="4.00" fill="#2b2b2b"/>
<rect x="752.00" y="507.00" width="1" height="2.00" fill="#2b2b2b"/>
<rect x="793.00" y="507.00" width="1" height="2.00" fill="#2b2b2b"/>
<rect x="834.00" y="505.00" width="1" height="4.00" fill="#2b2b2b"/>
<rect x="875.00" y="507.00" width="1" height="2.00" fill="#2b2b2b"/>
<rect x="916.00" y="507.00" width="1" height="2.00" fill="#2b2b2b"/>
<rect x="957.00" y="505.00" width="1" height="4.00" fill="#2b2b2b"/>
<rect x="998.00" y="507.00" width="1" height="2.00" fill="#2b2b2b"/>
<rect x="1039.00" y="507.00" width="1" height="2.00" fill="#2b2b2b"/>
<path d="M114.4 509.0 L114.4 495.2 L118.5 486.5 L118.5 509.0" fill="none" stroke="#00ff00" stroke-width="1.2" shape-rendering="auto" stroke-linejoin="round"/>
<path d="M162.5 509.0 L162.5 496.3 L166.5 496.3 L166.5 509.0" fill="none" stroke="#00ff00" stroke-width="1.2" shape-rendering="auto" stroke-linejoin="round"/>
<path d="M176.5 509.0 L176.5 476.0" fill="none" stroke="#00ff00" stroke-width="1.2" shape-rendering="auto" stroke-linejoin="round"/>
<path d="M200.2 509.0 L200.2 484.2 L207.5 496.3 L207.5 509.0" fill="none" stroke="#00ff00" stroke-width="1.2" shape-rendering="auto" stroke-linejoin="round"/>
<path d="M227.5 509.0 L227.5 475.0 L230.4 492.3 L237.3 492.3 L244.6 485.4 L251.5 485.4 L258.5 479.2 L261.7 492.3 L268.5 492.3 L275.4 482.1 L275.4 509.0" fill="none" stroke="#00ff00" stroke-width="1.2" shape-rendering="auto" stroke-linejoin="round"/>
<path d="M398.5 509.0 L398.5 473.3" fill="none" stroke="#00ff00" stroke-width="1.2" shape-rendering="auto" stroke-linejoin="round"/>
<path d="M422.3 509.0 L422.3 489.4 L430.0 486.3 L442.5 488.3 L442.5 509.0" fill="none" stroke="#00ff00" stroke-width="1.2" shape-rendering="auto" stroke-linejoin="round"/>
<path d="M521.5 509.0 L521.5 491.3" fill="none" stroke="#00ff00" stroke-width="1.2" shape-rendering="auto" stroke-linejoin="round"/>
<path d="M589.4 509.0 L589.4 493.1" fill="none" stroke="#00ff00" stroke-width="1.2" shape-rendering="auto" stroke-linejoin="round"/>
<path d="M702.5 509.0 L702.5 462.3" fill="none" stroke="#00ff00" stroke-width="1.2" shape-rendering="auto" stroke-linejoin="round"/>
<path d="M777.5 509.0 L777.5 488.3" fill="none" stroke="#00ff00" stroke-width="1.2" shape-rendering="auto" stroke-linejoin="round"/>
<path d="M798.3 509.0 L798.3 486.3" fill="none" stroke="#00ff00" stroke-width="1.2" shape-rendering="auto" stroke-linejoin="round"/>
<path d="M114.4 509.0 L114.4 443.1 L142.5 446.5 L148.8 441.0 L151.9 440.2 L162.3 441.5 L166.9 444.4 L171.7 442.3 L183.5 442.3 L186.5 440.4 L193.1 444.2 L193.5 509.0" fill="none" stroke="#0000ff" stroke-width="1.2" shape-rendering="auto" stroke-linejoin="round"/>
<path d="M101.5 509.0 L101.5 503.0" fill="none" stroke="#0000ff" stroke-width="1.2" shape-rendering="auto" stroke-linejoin="round"/>
<path d="M299.4 509.0 L299.4 484.2" fill="none" stroke="#0000ff" stroke-width="1.2" shape-rendering="auto" stroke-linejoin="round"/>
<path d="M408.3 509.0 L408.3 507.5" fill="none" stroke="#0000ff" stroke-width="1.2" shape-rendering="auto" stroke-linejoin="round"/>
<path d="M446.3 509.0 L446.3 507.0" fill="none" stroke="#0000ff" stroke-width="1.2" shape-rendering="auto" stroke-linejoin="round"/>
<path d="M507.5 509.0 L507.5 497.3" fill="none" stroke="#0000ff" stroke-width="1.2" shape-rendering="auto" stroke-linejoin="round"/>
<path d="M535.4 509.0 L535.4 505.0" fill="none" stroke="#0000ff" stroke-width="1.2" shape-rendering="auto" stroke-linejoin="round"/>
<path d="M558.5 509.0 L558.5 505.0" fill="none" stroke="#0000ff" stroke-width="1.2" shape-rendering="auto" stroke-linejoin="round"/>
<path d="M647.3 509.0 L647.3 481.3" fill="none" stroke="#0000ff" stroke-width="1.2" shape-rendering="auto" stroke-linejoin="round"/>
<path d="M1068.4 509.0 L1068.4 483.3 L1074.4 491.7 L1078.7 485.0" fill="none" stroke="#0000ff" stroke-width="1.2" shape-rendering="auto" stroke-linejoin="round"/>
<path d="M1091 427.4 L1103 431.8" stroke="#0000ff" stroke-width="1.5" shape-rendering="auto"/>
<path d="M1091 444.4 L1103 448.8" stroke="#ff0000" stroke-width="1.5" shape-rendering="auto"/>
<path d="M1091 461.4 L1103 465.8" stroke="#00ff00" stroke-width="1.5" shape-rendering="auto"/>
<rect x="95" y="513" width="986" height="178" fill="#000"/>
<rect x="87.00" y="659.00" width="8.00" height="1" fill="#2b2b2b"/>
<rect x="87.00" y="606.00" width="8.00" height="1" fill="#2b2b2b"/>
<rect x="87.00" y="554.00" width="8.00" height="1" fill="#2b2b2b"/>
<rect x="91.00" y="686.00" width="4.00" height="1" fill="#2b2b2b"/>
<rect x="91.00" y="679.00" width="4.00" height="1" fill="#2b2b2b"/>
<rect x="91.00" y="674.00" width="4.00" height="1" fill="#2b2b2b"/>
<rect x="91.00" y="670.00" width="4.00" height="1" fill="#2b2b2b"/>
<rect x="91.00" y="667.00" width="4.00" height="1" fill="#2b2b2b"/>
<rect x="91.00" y="664.00" width="4.00" height="1" fill="#2b2b2b"/>
<rect x="91.00" y="661.00" width="4.00" height="1" fill="#2b2b2b"/>
<rect x="91.00" y="643.00" width="4.00" height="1" fill="#2b2b2b"/>
<rect x="91.00" y="634.00" width="4.00" height="1" fill="#2b2b2b"/>
<rect x="91.00" y="627.00" width="4.00" height="1" fill="#2b2b2b"/>
<rect x="91.00" y="622.00" width="4.00" height="1" fill="#2b2b2b"/>
<rect x="91.00" y="618.00" width="4.00" height="1" fill="#2b2b2b"/>
<rect x="91.00" y="615.00" width="4.00" height="1" fill="#2b2b2b"/>
<rect x="91.00" y="612.00" width="4.00" height="1" fill="#2b2b2b"/>
<rect x="91.00" y="609.00" width="4.00" height="1" fill="#2b2b2b"/>
<rect x="91.00" y="591.00" width="4.00" height="1" fill="#2b2b2b"/>
<rect x="91.00" y="582.00" width="4.00" height="1" fill="#2b2b2b"/>
<rect x="91.00" y="575.00" width="4.00" height="1" fill="#2b2b2b"/>
<rect x="91.00" y="570.00" width="4.00" height="1" fill="#2b2b2b"/>
<rect x="91.00" y="566.00" width="4.00" height="1" fill="#2b2b2b"/>
<rect x="91.00" y="562.00" width="4.00" height="1" fill="#2b2b2b"/>
<rect x="91.00" y="559.00" width="4.00" height="1" fill="#2b2b2b"/>
<rect x="91.00" y="557.00" width="4.00" height="1" fill="#2b2b2b"/>
<rect x="91.00" y="538.00" width="4.00" height="1" fill="#2b2b2b"/>
<rect x="91.00" y="529.00" width="4.00" height="1" fill="#2b2b2b"/>
<rect x="91.00" y="523.00" width="4.00" height="1" fill="#2b2b2b"/>
<rect x="91.00" y="518.00" width="4.00" height="1" fill="#2b2b2b"/>
<rect x="91.00" y="514.00" width="4.00" height="1" fill="#2b2b2b"/>
<path d="M96 676h2v14h-2zM104 676h1v14h-1zM111 676h5v14h-5zM119 676h1v14h-1zM123 676h1v14h-1zM126 676h3v14h-3zM133 676h1v14h-1zM137 676h1v14h-1zM207 676h1v14h-1zM212 676h1v14h-1zM215 676h1v14h-1zM218 676h1v14h-1zM223 676h1v14h-1zM227 676h1v14h-1zM230 676h1v14h-1zM232 676h3v14h-3zM238 676h1v14h-1zM242 676h1v14h-1zM245 676h3v14h-3zM252 676h5v14h-5zM293 676h1v14h-1zM326 676h1v14h-1zM332 676h2v14h-2zM336 676h3v14h-3zM346 676h1v14h-1zM350 676h1v14h-1zM362 676h2v14h-2zM367 676h1v14h-1zM369 676h2v14h-2zM383 676h1v14h-1zM390 676h3v14h-3zM398 676h1v14h-1zM402 676h1v14h-1zM409 676h1v14h-1zM416 676h1v14h-1zM429 676h2v14h-2zM438 676h1v14h-1zM449 676h4v14h-4zM460 676h1v14h-1zM462 676h2v14h-2zM469 676h1v14h-1zM477 676h2v14h-2zM498 676h1v14h-1zM512 676h1v14h-1zM518 676h2v14h-2zM561 676h1v14h-1zM569 676h1v14h-1zM574 676h2v14h-2zM602 676h1v14h-1zM605 676h1v14h-1zM607 676h2v14h-2zM610 676h1v14h-1zM617 676h1v14h-1zM632 676h3v14h-3zM648 676h2v14h-2zM676 676h1v14h-1zM696 676h2v14h-2zM700 676h2v14h-2zM704 676h3v14h-3zM718 676h3v14h-3zM725 676h1v14h-1zM734 676h2v14h-2zM766 676h1v14h-1zM796 676h1v14h-1zM814 676h1v14h-1zM825 676h1v14h-1zM832 676h2v14h-2zM926 676h1v14h-1zM931 676h3v14h-3zM938 676h4v14h-4zM948 676h1v14h-1zM963 676h1v14h-1zM987 676h2v14h-2zM997 676h1v14h-1zM1000 676h3v14h-3zM1004 676h1v14h-1zM1020 676h3v14h-3zM1030 676h1v14h-1zM1039 676h2v14h-2zM1053 676h2v14h-2zM111 664h3v12h-3zM246 664h2v12h-2zM254 664h2v12h-2zM258 664h2v13h-2zM278 647h1v43h-1zM282 664h1v26h-1zM284 647h2v18h-2zM286 630h1v60h-1zM287 618h2v12h-2zM353 664h1v26h-1zM357 664h1v26h-1zM390 647h1v29h-1zM403 664h2v13h-2zM420 664h1v13h-1zM423 664h1v13h-1zM436 630h2v60h-2zM442 664h1v26h-1zM473 664h2v26h-2zM480 664h1v26h-1zM491 664h1v26h-1zM494 664h1v13h-1zM516 664h1v26h-1zM531 664h1v26h-1zM535 664h1v26h-1zM566 647h2v43h-2zM622 630h2v60h-2zM632 664h1v12h-1zM637 647h2v43h-2zM580 664h1v13h-1zM654 664h1v13h-1zM670 664h2v13h-2zM684 647h1v18h-1zM704 664h2v12h-2zM715 664h2v26h-2zM719 647h2v29h-2zM744 664h1v26h-1zM822 664h1v26h-1zM741 664h2v13h-2zM938 664h2v12h-2zM945 664h1v26h-1zM949 664h2v13h-2zM956 664h1v26h-1zM993 664h1v26h-1zM1029 664h1v13h-1zM1027 647h2v18h-2zM1044 664h1v13h-1zM1056 664h1v26h-1zM1059 664h1v26h-1zM1064 618h1v29h-1zM1038 647h1v18h-1zM97 618h1v30h-1zM101 647h2v18h-2zM103 618h4v12h-4zM107 647h1v18h-1zM115 647h1v29h-1zM116 630h2v17h-2zM123 630h1v17h-1zM126 647h1v29h-1zM133 647h1v43h-1zM148 630h1v17h-1zM155 618h1v46h-1zM159 630h1v17h-1zM170 630h1v17h-1zM174 618h1v12h-1zM179 618h3v29h-3zM196 618h1v12h-1zM194 630h3v34h-3zM198 630h2v34h-2zM202 585h4v79h-4zM206 647h2v17h-2zM209 618h2v29h-2zM216 618h3v12h-3zM217 630h1v34h-1zM219 647h3v17h-3zM223 647h1v21h-1zM250 618h2v30h-2zM263 630h1v18h-1zM316 618h1v12h-1zM321 630h2v18h-2zM342 647h1v18h-1zM347 630h2v18h-2zM351 630h2v18h-2zM380 630h2v18h-2zM382 630h1v35h-1zM383 630h1v18h-1zM394 618h1v12h-1zM398 630h1v18h-1zM417 647h2v18h-2zM423 618h2v12h-2zM427 630h1v35h-1zM435 647h1v18h-1zM438 618h2v12h-2zM490 618h1v12h-1zM499 618h2v12h-2zM505 618h1v12h-1zM529 630h2v18h-2zM544 618h2v30h-2zM550 630h1v18h-1zM554 618h1v12h-1zM561 618h1v30h-1zM570 618h2v30h-2zM576 630h1v18h-1zM600 618h2v12h-2zM603 630h2v18h-2zM611 630h2v18h-2zM644 630h2v18h-2zM687 618h2v12h-2zM708 630h2v18h-2zM715 618h2v12h-2zM751 618h1v47h-1zM797 630h2v18h-2zM800 647h1v18h-1zM803 618h1v12h-1zM806 630h1v18h-1zM810 618h1v12h-1zM836 618h1v12h-1zM926 618h1v12h-1zM955 618h1v12h-1zM971 618h1v12h-1zM989 618h1v12h-1zM1009 618h2v12h-2zM96 555h1v14h-1zM97 555h1v14h-1zM96 526h1v25h-1zM99 555h1v30h-1zM100 555h1v30h-1zM101 551h1v34h-1zM99 534h2v21h-2zM103 555h1v30h-1zM104 555h1v30h-1zM103 585h2v21h-2zM109 551h1v34h-1zM110 555h1v30h-1zM109 585h2v21h-2zM109 526h1v29h-1zM113 573h1v12h-1zM116 555h1v30h-1zM117 555h1v25h-1zM116 585h2v21h-2zM121 555h1v14h-1zM121 534h1v17h-1zM123 555h1v18h-1zM124 555h1v25h-1zM125 555h1v25h-1zM126 555h1v14h-1zM124 526h2v25h-2zM128 555h1v18h-1zM129 555h1v18h-1zM131 534h2v17h-2zM135 555h1v25h-1zM136 551h1v34h-1zM135 585h2v45h-2zM139 555h1v30h-1zM141 530h2v21h-2zM145 551h1v34h-1zM146 555h1v30h-1zM147 555h1v30h-1zM147 545h1v6h-1zM149 562h1v18h-1zM150 573h1v7h-1zM151 573h1v7h-1zM153 555h1v14h-1zM154 555h1v14h-1zM156 539h2v12h-2zM161 555h1v30h-1zM161 585h1v21h-1zM161 539h1v16h-1zM165 555h1v30h-1zM166 555h1v30h-1zM167 555h1v30h-1zM165 585h2v21h-2zM165 526h2v25h-2zM170 534h1v39h-1zM171 526h1v47h-1zM174 585h1v21h-1zM176 555h1v30h-1zM177 555h1v30h-1zM178 551h1v34h-1zM182 585h2v33h-2zM185 585h2v33h-2zM190 551h1v22h-1zM193 585h2v21h-2zM197 551h1v34h-1zM197 585h1v21h-1zM197 539h1v16h-1zM202 585h2v45h-2zM207 585h2v21h-2zM212 555h1v30h-1zM215 530h1v55h-1zM216 534h1v51h-1zM217 545h1v40h-1zM215 585h2v33h-2zM224 555h1v18h-1zM225 555h1v18h-1zM224 534h2v17h-2zM227 530h1v43h-1zM228 545h1v28h-1zM229 530h1v43h-1zM230 539h1v34h-1zM234 606h2v12h-2zM239 555h1v25h-1zM240 555h1v14h-1zM239 526h2v25h-2zM243 551h1v18h-1zM244 551h1v22h-1zM245 555h1v30h-1zM246 555h1v30h-1zM245 539h2v12h-2zM243 519h2v7h-2zM251 555h1v30h-1zM252 555h1v30h-1zM254 526h1v59h-1zM254 585h1v21h-1zM261 555h1v25h-1zM262 555h1v30h-1zM263 555h1v30h-1zM262 585h2v21h-2zM261 530h1v21h-1zM268 534h1v39h-1zM269 534h1v46h-1zM272 551h1v29h-1zM272 539h1v16h-1zM274 585h2v21h-2zM279 555h1v18h-1zM280 555h1v18h-1zM283 585h2v33h-2zM288 573h1v12h-1zM288 585h1v21h-1zM290 534h1v46h-1zM292 551h1v34h-1zM293 555h1v18h-1zM297 569h1v11h-1zM298 573h1v7h-1zM299 562h1v18h-1zM302 551h1v34h-1zM303 555h1v30h-1zM302 539h1v16h-1zM305 585h1v21h-1zM310 562h1v23h-1zM310 585h1v33h-1zM312 555h1v18h-1zM313 555h1v18h-1zM314 551h1v22h-1zM315 555h1v18h-1zM318 585h1v21h-1zM320 555h1v18h-1zM321 555h1v18h-1zM320 519h2v7h-2zM325 606h1v12h-1zM329 555h1v30h-1zM329 585h1v45h-1zM329 539h1v12h-1zM332 530h1v55h-1zM333 539h1v46h-1zM336 585h2v21h-2zM339 555h1v18h-1zM340 555h1v18h-1zM341 555h1v18h-1zM342 555h1v18h-1zM342 530h1v25h-1zM344 551h1v18h-1zM345 555h1v25h-1zM345 545h1v6h-1zM347 555h1v25h-1zM348 555h1v25h-1zM347 534h1v17h-1zM353 551h1v34h-1zM353 585h1v21h-1zM353 534h1v17h-1zM357 555h1v30h-1zM358 555h1v25h-1zM359 555h1v30h-1zM360 555h1v30h-1zM357 585h2v21h-2zM358 534h2v21h-2zM363 555h1v14h-1zM364 551h1v18h-1zM365 555h1v14h-1zM367 551h1v22h-1zM369 555h1v25h-1zM373 555h1v30h-1zM374 551h1v34h-1zM373 585h2v33h-2zM376 606h2v12h-2zM380 555h1v25h-1zM381 555h1v25h-1zM380 530h1v25h-1zM386 555h1v25h-1zM387 551h1v29h-1zM386 534h2v17h-2zM390 551h1v22h-1zM391 555h1v18h-1zM393 585h2v62h-2zM397 555h1v30h-1zM397 585h1v21h-1zM400 585h2v21h-2zM403 555h1v30h-1zM404 551h1v34h-1zM403 585h2v21h-2zM404 526h1v29h-1zM407 555h1v25h-1zM408 555h1v14h-1zM409 555h1v30h-1zM407 585h2v33h-2zM407 526h2v25h-2zM413 585h2v21h-2zM418 551h1v22h-1zM419 555h1v18h-1zM420 555h1v18h-1zM421 555h1v18h-1zM423 555h1v30h-1zM423 545h1v6h-1zM425 555h1v25h-1zM426 555h1v25h-1zM428 555h1v14h-1zM429 551h1v29h-1zM430 555h1v25h-1zM428 534h1v21h-1zM437 573h1v12h-1zM437 585h1v21h-1zM439 545h1v40h-1zM443 562h1v23h-1zM444 569h1v4h-1zM443 585h2v33h-2zM446 551h1v29h-1zM446 530h1v21h-1zM449 555h1v30h-1zM449 534h1v21h-1zM451 585h1v45h-1zM453 585h2v33h-2zM457 551h1v22h-1zM458 555h1v18h-1zM459 555h1v18h-1zM460 555h1v18h-1zM457 534h2v21h-2zM463 555h1v25h-1zM464 551h1v29h-1zM466 606h1v12h-1zM469 606h1v12h-1zM473 585h2v21h-2zM476 585h2v33h-2zM479 551h1v22h-1zM480 555h1v18h-1zM483 569h1v4h-1zM484 569h1v4h-1zM485 569h1v4h-1zM487 555h1v25h-1zM488 555h1v25h-1zM490 551h1v34h-1zM491 555h1v25h-1zM491 539h1v12h-1zM493 569h1v16h-1zM494 562h1v23h-1zM495 569h1v16h-1zM496 573h1v7h-1zM493 585h2v45h-2zM498 539h1v34h-1zM499 545h1v24h-1zM500 534h1v46h-1zM502 606h1v12h-1zM506 585h1v21h-1zM509 585h2v21h-2zM514 534h1v17h-1zM516 555h1v25h-1zM517 551h1v34h-1zM518 555h1v30h-1zM519 555h1v30h-1zM518 585h2v21h-2zM522 555h1v25h-1zM522 530h1v21h-1zM522 513h1v13h-1zM524 551h1v34h-1zM525 555h1v25h-1zM524 534h1v17h-1zM527 526h2v29h-2zM532 551h1v18h-1zM533 551h1v18h-1zM536 555h1v30h-1zM537 555h1v30h-1zM540 585h2v21h-2zM545 606h2v12h-2zM549 530h1v21h-1zM553 606h2v12h-2zM558 555h1v25h-1zM559 555h1v18h-1zM558 585h2v21h-2zM558 539h1v12h-1zM561 555h1v30h-1zM562 555h1v30h-1zM561 585h2v21h-2zM561 545h1v10h-1zM564 551h1v34h-1zM564 585h1v21h-1zM564 539h1v16h-1zM566 551h1v18h-1zM568 555h1v30h-1zM569 555h1v14h-1zM570 551h1v34h-1zM571 555h1v30h-1zM568 585h2v21h-2zM573 562h1v18h-1zM575 555h1v25h-1zM579 555h1v30h-1zM580 555h1v30h-1zM579 534h1v17h-1zM582 555h1v18h-1zM583 555h1v18h-1zM584 555h1v18h-1zM587 562h1v18h-1zM588 569h1v16h-1zM587 585h2v33h-2zM591 555h1v30h-1zM591 585h1v33h-1zM594 551h1v34h-1zM595 555h1v30h-1zM594 530h1v21h-1zM598 555h1v18h-1zM599 555h1v14h-1zM600 555h1v30h-1zM598 585h2v21h-2zM603 555h1v30h-1zM604 555h1v25h-1zM603 585h2v33h-2zM603 545h2v10h-2zM606 551h1v29h-1zM607 555h1v25h-1zM609 555h1v30h-1zM609 585h1v21h-1zM609 539h1v16h-1zM612 555h1v18h-1zM613 555h1v18h-1zM615 555h1v25h-1zM616 555h1v30h-1zM615 585h2v21h-2zM618 585h1v45h-1zM620 530h1v50h-1zM622 555h1v30h-1zM622 585h1v21h-1zM622 530h1v21h-1zM624 555h1v18h-1zM625 555h1v25h-1zM626 555h1v14h-1zM627 555h1v25h-1zM631 555h1v30h-1zM632 555h1v30h-1zM631 585h2v21h-2zM631 534h2v21h-2zM634 555h1v30h-1zM634 585h1v21h-1zM636 555h1v14h-1zM636 539h1v12h-1zM638 551h1v29h-1zM639 555h1v25h-1zM640 555h1v25h-1zM642 555h1v30h-1zM642 530h1v25h-1zM644 573h1v12h-1zM645 573h1v7h-1zM646 569h1v16h-1zM650 555h1v18h-1zM651 551h1v22h-1zM650 539h1v12h-1zM654 555h1v30h-1zM654 534h1v17h-1zM657 555h1v30h-1zM657 585h1v33h-1zM660 555h1v30h-1zM661 555h1v30h-1zM662 555h1v30h-1zM661 530h1v21h-1zM664 530h1v43h-1zM665 526h1v54h-1zM664 585h2v21h-2zM670 530h1v21h-1zM673 555h1v30h-1zM674 551h1v34h-1zM673 585h2v21h-2zM676 526h1v47h-1zM677 539h1v34h-1zM678 539h1v34h-1zM681 551h1v34h-1zM682 551h1v34h-1zM683 555h1v30h-1zM681 585h2v33h-2zM682 526h2v29h-2zM686 585h2v33h-2zM690 555h1v30h-1zM691 551h1v34h-1zM693 555h1v14h-1zM694 555h1v14h-1zM695 555h1v14h-1zM693 526h1v29h-1zM698 573h1v12h-1zM698 585h1v21h-1zM700 555h1v30h-1zM701 555h1v14h-1zM700 585h2v33h-2zM703 585h2v21h-2zM707 555h1v30h-1zM707 534h1v21h-1zM709 606h2v12h-2zM714 539h1v46h-1zM714 585h1v21h-1zM717 585h2v21h-2zM722 555h1v30h-1zM723 555h1v14h-1zM724 555h1v30h-1zM726 585h2v33h-2zM730 585h2v33h-2zM734 569h1v11h-1zM736 555h1v25h-1zM737 555h1v25h-1zM737 539h1v16h-1zM741 551h1v29h-1zM742 555h1v25h-1zM741 530h2v21h-2zM744 555h1v14h-1zM745 555h1v14h-1zM744 545h2v6h-2zM747 539h1v46h-1zM748 530h1v39h-1zM749 530h1v39h-1zM748 585h2v21h-2zM751 585h2v21h-2zM756 530h1v21h-1zM761 555h1v18h-1zM762 555h1v18h-1zM763 551h1v22h-1zM762 545h1v10h-1zM768 569h1v16h-1zM768 585h1v21h-1zM770 562h1v23h-1zM772 555h1v25h-1zM773 555h1v25h-1zM772 539h1v16h-1zM776 585h2v33h-2zM782 555h1v14h-1zM783 555h1v30h-1zM782 585h2v33h-2zM785 551h1v22h-1zM786 555h1v25h-1zM787 555h1v18h-1zM785 545h1v10h-1zM789 555h1v25h-1zM790 555h1v25h-1zM790 534h1v21h-1zM792 555h1v30h-1zM793 555h1v18h-1zM793 530h1v21h-1zM797 555h1v18h-1zM798 555h1v18h-1zM799 555h1v18h-1zM799 539h1v12h-1zM801 569h1v16h-1zM802 562h1v23h-1zM802 585h2v21h-2zM806 539h1v30h-1zM810 606h2v12h-2zM813 569h1v16h-1zM814 569h1v16h-1zM813 585h2v21h-2zM816 551h1v18h-1zM817 555h1v18h-1zM818 555h1v30h-1zM816 585h2v21h-2zM818 539h1v16h-1zM820 551h1v22h-1zM820 534h1v17h-1zM822 534h1v39h-1zM824 606h2v12h-2zM828 555h1v30h-1zM829 551h1v34h-1zM830 555h1v30h-1zM829 585h2v33h-2zM832 539h2v6h-2zM836 555h1v14h-1zM837 555h1v30h-1zM841 585h2v21h-2zM845 555h1v18h-1zM846 555h1v30h-1zM847 555h1v30h-1zM845 585h2v33h-2zM847 545h1v10h-1zM850 555h1v30h-1zM851 555h1v30h-1zM852 555h1v18h-1zM853 555h1v18h-1zM852 585h2v21h-2zM856 551h1v29h-1zM857 555h1v25h-1zM857 530h1v21h-1zM859 555h1v14h-1zM860 555h1v14h-1zM861 555h1v14h-1zM865 585h2v21h-2zM869 551h1v22h-1zM870 555h1v18h-1zM871 555h1v18h-1zM872 555h1v18h-1zM872 530h1v25h-1zM874 555h1v18h-1zM878 555h1v30h-1zM878 585h1v21h-1zM878 530h1v25h-1zM880 585h2v21h-2zM884 551h1v34h-1zM885 555h1v30h-1zM887 606h2v12h-2zM887 513h2v13h-2zM891 606h2v12h-2zM895 555h1v30h-1zM896 555h1v30h-1zM897 555h1v30h-1zM898 555h1v18h-1zM896 545h3v6h-3zM901 551h1v34h-1zM902 555h1v30h-1zM903 555h1v25h-1zM904 555h1v30h-1zM903 585h2v21h-2zM906 551h1v29h-1zM908 555h1v25h-1zM909 555h1v18h-1zM910 555h1v25h-1zM911 555h1v18h-1zM914 534h2v17h-2zM917 555h1v18h-1zM918 555h1v18h-1zM919 555h1v18h-1zM921 551h1v18h-1zM922 555h1v25h-1zM923 555h1v25h-1zM921 530h1v25h-1zM925 551h1v34h-1zM925 530h1v25h-1zM930 555h1v25h-1zM934 555h1v25h-1zM934 526h1v25h-1zM936 585h1v21h-1zM938 555h1v30h-1zM938 526h1v29h-1zM940 585h2v21h-2zM945 526h2v29h-2zM948 555h1v25h-1zM949 555h1v25h-1zM948 539h1v16h-1zM952 555h1v14h-1zM954 585h1v21h-1zM958 555h1v18h-1zM959 555h1v18h-1zM960 555h1v18h-1zM959 539h2v16h-2zM962 555h1v25h-1zM964 551h1v29h-1zM965 555h1v25h-1zM966 551h1v18h-1zM965 530h2v25h-2zM971 555h1v30h-1zM972 555h1v30h-1zM972 545h1v10h-1zM977 555h1v30h-1zM978 555h1v30h-1zM979 555h1v30h-1zM977 585h2v21h-2zM977 530h3v21h-3zM982 585h2v33h-2zM987 569h1v16h-1zM987 585h1v21h-1zM992 555h1v18h-1zM993 551h1v22h-1zM994 555h1v18h-1zM996 555h1v30h-1zM996 526h1v25h-1zM999 555h1v25h-1zM999 539h1v16h-1zM1001 585h2v21h-2zM1005 555h1v25h-1zM1005 530h1v25h-1zM1008 539h1v46h-1zM1011 539h1v46h-1zM1013 555h1v30h-1zM1013 585h1v21h-1zM1016 555h1v25h-1zM1019 555h1v30h-1zM1021 606h1v12h-1zM1023 573h1v12h-1zM1023 585h1v33h-1zM1025 569h1v16h-1zM1025 585h1v45h-1zM1027 555h1v25h-1zM1029 555h1v14h-1zM1030 551h1v34h-1zM1029 585h2v21h-2zM1032 562h1v18h-1zM1033 569h1v11h-1zM1034 569h1v11h-1zM1035 569h1v11h-1zM1038 555h1v18h-1zM1041 551h1v34h-1zM1042 555h1v30h-1zM1045 555h1v30h-1zM1046 551h1v34h-1zM1047 555h1v25h-1zM1047 526h1v25h-1zM1050 555h1v25h-1zM1050 545h1v10h-1zM1053 585h2v45h-2zM1059 555h1v18h-1zM1060 551h1v34h-1zM1062 526h1v59h-1zM1066 526h1v19h-1zM1068 585h2v33h-2zM1071 555h1v30h-1zM1071 526h1v29h-1zM1076 555h1v30h-1zM1077 551h1v18h-1zM1078 555h1v18h-1zM1078 539h1v16h-1zM876 580h4v5h-4zM1068 580h5v5h-5zM111 580h2v5h-2zM447 580h3v5h-3zM595 580h5v5h-5zM991 580h2v5h-2zM916 580h2v5h-2zM173 580h3v5h-3zM732 580h5v5h-5zM960 580h5v5h-5zM259 580h5v5h-5zM499 580h3v5h-3zM990 580h2v5h-2zM466 580h4v5h-4zM637 580h3v5h-3zM415 580h3v5h-3zM700 580h2v5h-2zM313 580h3v5h-3zM935 580h4v5h-4zM841 580h5v5h-5zM436 580h5v5h-5zM494 580h4v5h-4zM418 580h2v5h-2zM440 580h5v5h-5zM438 580h3v5h-3zM118 580h3v5h-3zM567 580h2v5h-2zM743 580h3v5h-3zM841 580h3v5h-3zM376 580h5v5h-5zM376 580h2v5h-2zM609 580h4v5h-4zM462 580h3v5h-3zM812 580h2v5h-2zM1034 580h2v5h-2zM990 580h3v5h-3zM889 580h5v5h-5zM745 580h2v5h-2zM468 580h4v5h-4zM909 580h3v5h-3zM990 580h3v5h-3zM794 580h2v5h-2zM408 580h4v5h-4zM854 580h4v5h-4zM618 580h3v5h-3z" fill="url(#g4)"/>
<path d="M141 676h4v14h-4zM145 664h25v26h-25zM174 664h30v26h-30zM170 676h4v14h-4zM145 647h3v17h-3zM150 647h5v17h-5zM159 647h4v17h-4zM167 647h1v17h-1zM175 647h1v17h-1zM179 647h6v17h-6zM190 647h1v17h-1zM193 647h4v17h-4zM197 647h3v17h-3zM201 647h3v17h-3zM264 676h16v14h-16zM268 664h3v12h-3zM252 680h5v10h-5z" fill="url(#h4)"/>
<path d="M1063 664h18v26h-18zM1063 647h5v17h-5zM1076 647h5v17h-5z" fill="url(#r4)"/>
<rect x="451" y="513" width="2" height="6" fill="rgb(250,130,10)"/>
<rect x="451" y="519" width="2" height="5" fill="rgb(230,220,20)"/>
<rect x="451" y="524" width="2" height="6" fill="rgb(60,200,100)"/>
<rect x="451" y="530" width="2" height="8" fill="rgb(15,160,180)"/>
<rect x="451" y="538" width="2" height="13" fill="rgb(20,80,240)"/>
<rect x="451" y="551" width="2" height="5" fill="rgb(250,130,10)"/>
<rect x="451" y="556" width="2" height="6" fill="rgb(225,85,90)"/>
<rect x="451" y="562" width="2" height="10" fill="rgb(245,80,10)"/>
<rect x="451" y="572" width="2" height="5" fill="rgb(200,235,20)"/>
<rect x="451" y="577" width="2" height="5" fill="rgb(20,170,160)"/>
<rect x="451" y="582" width="2" height="24" fill="rgb(20,100,240)"/>
<rect x="136.00" y="689.00" width="1" height="2.00" fill="#5a5a5a"/>
<rect x="177.00" y="689.00" width="1" height="2.00" fill="#5a5a5a"/>
<rect x="218.00" y="687.00" width="1" height="4.00" fill="#5a5a5a"/>
<rect x="259.00" y="689.00" width="1" height="2.00" fill="#5a5a5a"/>
<rect x="300.00" y="689.00" width="1" height="2.00" fill="#5a5a5a"/>
<rect x="341.00" y="687.00" width="1" height="4.00" fill="#5a5a5a"/>
<rect x="382.00" y="689.00" width="1" height="2.00" fill="#5a5a5a"/>
<rect x="423.00" y="689.00" width="1" height="2.00" fill="#5a5a5a"/>
<rect x="464.00" y="687.00" width="1" height="4.00" fill="#5a5a5a"/>
<rect x="505.00" y="689.00" width="1" height="2.00" fill="#5a5a5a"/>
<rect x="546.00" y="689.00" width="1" height="2.00" fill="#5a5a5a"/>
<rect x="587.00" y="687.00" width="1" height="4.00" fill="#5a5a5a"/>
<rect x="628.00" y="689.00" width="1" height="2.00" fill="#5a5a5a"/>
<rect x="669.00" y="689.00" width="1" height="2.00" fill="#5a5a5a"/>
<rect x="710.00" y="687.00" width="1" height="4.00" fill="#5a5a5a"/>
<rect x="751.00" y="689.00" width="1" height="2.00" fill="#5a5a5a"/>
<rect x="792.00" y="689.00" width="1" height="2.00" fill="#5a5a5a"/>
<rect x="833.00" y="687.00" width="1" height="4.00" fill="#5a5a5a"/>
<rect x="874.00" y="689.00" width="1" height="2.00" fill="#5a5a5a"/>
<rect x="915.00" y="689.00" width="1" height="2.00" fill="#5a5a5a"/>
<rect x="956.00" y="687.00" width="1" height="4.00" fill="#5a5a5a"/>
<rect x="997.00" y="689.00" width="1" height="2.00" fill="#5a5a5a"/>
<rect x="1038.00" y="689.00" width="1" height="2.00" fill="#5a5a5a"/>
<rect x="1092" y="515" width="12.5" height="176" fill="url(#cb)"/>
<rect x="1104.00" y="515.00" width="1" height="177.00" fill="#2b2b2b"/>
<rect x="1105.00" y="515.00" width="8.00" height="1" fill="#2b2b2b"/>
<rect x="1105.00" y="534.00" width="4.00" height="1" fill="#2b2b2b"/>
<rect x="1105.00" y="554.00" width="8.00" height="1" fill="#2b2b2b"/>
<rect x="1105.00" y="573.00" width="4.00" height="1" fill="#2b2b2b"/>
<rect x="1105.00" y="593.00" width="8.00" height="1" fill="#2b2b2b"/>
<rect x="1105.00" y="612.00" width="4.00" height="1" fill="#2b2b2b"/>
<rect x="1105.00" y="632.00" width="8.00" height="1" fill="#2b2b2b"/>
<rect x="1105.00" y="651.00" width="4.00" height="1" fill="#2b2b2b"/>
<rect x="1105.00" y="671.00" width="8.00" height="1" fill="#2b2b2b"/>
<rect x="1105.00" y="690.00" width="4.00" height="1" fill="#2b2b2b"/>
<rect x="95" y="695" width="986" height="16" fill="#2b2b2b"/>
<rect x="97" y="696" width="641" height="14" fill="#ff0000"/>
<rect x="95" y="695" width="2" height="16" fill="#0a0a0a"/>
<rect x="739" y="696" width="341" height="14" fill="#00ff00"/>
<rect x="136.00" y="711.00" width="1" height="4.00" fill="#2b2b2b"/>
<rect x="177.00" y="711.00" width="1" height="4.00" fill="#2b2b2b"/>
<rect x="218.00" y="711.00" width="1" height="8.00" fill="#2b2b2b"/>
<rect x="259.00" y="711.00" width="1" height="4.00" fill="#2b2b2b"/>
<rect x="300.00" y="711.00" width="1" height="4.00" fill="#2b2b2b"/>
<rect x="341.00" y="711.00" width="1" height="8.00" fill="#2b2b2b"/>
<rect x="382.00" y="711.00" width="1" height="4.00" fill="#2b2b2b"/>
<rect x="423.00" y="711.00" width="1" height="4.00" fill="#2b2b2b"/>
<rect x="464.00" y="711.00" width="1" height="8.00" fill="#2b2b2b"/>
<rect x="505.00" y="711.00" width="1" height="4.00" fill="#2b2b2b"/>
<rect x="546.00" y="711.00" width="1" height="4.00" fill="#2b2b2b"/>
<rect x="587.00" y="711.00" width="1" height="8.00" fill="#2b2b2b"/>
<rect x="628.00" y="711.00" width="1" height="4.00" fill="#2b2b2b"/>
<rect x="669.00" y="711.00" width="1" height="4.00" fill="#2b2b2b"/>
<rect x="710.00" y="711.00" width="1" height="8.00" fill="#2b2b2b"/>
<rect x="751.00" y="711.00" width="1" height="4.00" fill="#2b2b2b"/>
<rect x="792.00" y="711.00" width="1" height="4.00" fill="#2b2b2b"/>
<rect x="833.00" y="711.00" width="1" height="8.00" fill="#2b2b2b"/>
<rect x="874.00" y="711.00" width="1" height="4.00" fill="#2b2b2b"/>
<rect x="915.00" y="711.00" width="1" height="4.00" fill="#2b2b2b"/>
<rect x="956.00" y="711.00" width="1" height="8.00" fill="#2b2b2b"/>
<rect x="997.00" y="711.00" width="1" height="4.00" fill="#2b2b2b"/>
<rect x="1038.00" y="711.00" width="1" height="4.00" fill="#2b2b2b"/>
<rect x="1080.00" y="711.00" width="1" height="8.00" fill="#2b2b2b"/>
<rect x="215.5" y="802.5" width="151" height="148" fill="#fff" stroke="#2b2b2b" stroke-width="1"/>
<rect x="207.00" y="803.00" width="8.00" height="1" fill="#2b2b2b"/>
<rect x="211.00" y="804.00" width="4.00" height="1" fill="#3a3a3a"/>
<rect x="211.00" y="806.00" width="4.00" height="1" fill="#3a3a3a"/>
<rect x="211.00" y="808.00" width="4.00" height="1" fill="#3a3a3a"/>
<rect x="211.00" y="810.00" width="4.00" height="1" fill="#3a3a3a"/>
<rect x="211.00" y="812.00" width="4.00" height="1" fill="#3a3a3a"/>
<rect x="211.00" y="814.00" width="4.00" height="1" fill="#3a3a3a"/>
<rect x="211.00" y="815.00" width="4.00" height="1" fill="#3a3a3a"/>
<rect x="211.00" y="817.00" width="4.00" height="1" fill="#3a3a3a"/>
<rect x="211.00" y="819.00" width="4.00" height="1" fill="#3a3a3a"/>
<rect x="207.00" y="821.00" width="8.00" height="1" fill="#2b2b2b"/>
<rect x="211.00" y="823.00" width="4.00" height="1" fill="#3a3a3a"/>
<rect x="211.00" y="825.00" width="4.00" height="1" fill="#3a3a3a"/>
<rect x="211.00" y="826.00" width="4.00" height="1" fill="#3a3a3a"/>
<rect x="211.00" y="828.00" width="4.00" height="1" fill="#3a3a3a"/>
<rect x="211.00" y="830.00" width="4.00" height="1" fill="#3a3a3a"/>
<rect x="211.00" y="832.00" width="4.00" height="1" fill="#3a3a3a"/>
<rect x="211.00" y="834.00" width="4.00" height="1" fill="#3a3a3a"/>
<rect x="211.00" y="836.00" width="4.00" height="1" fill="#3a3a3a"/>
<rect x="211.00" y="837.00" width="4.00" height="1" fill="#3a3a3a"/>
<rect x="207.00" y="839.00" width="8.00" height="1" fill="#2b2b2b"/>
<rect x="211.00" y="841.00" width="4.00" height="1" fill="#3a3a3a"/>
<rect x="211.00" y="843.00" width="4.00" height="1" fill="#3a3a3a"/>
<rect x="211.00" y="845.00" width="4.00" height="1" fill="#3a3a3a"/>
<rect x="211.00" y="847.00" width="4.00" height="1" fill="#3a3a3a"/>
<rect x="211.00" y="848.00" width="4.00" height="1" fill="#3a3a3a"/>
<rect x="211.00" y="850.00" width="4.00" height="1" fill="#3a3a3a"/>
<rect x="211.00" y="852.00" width="4.00" height="1" fill="#3a3a3a"/>
<rect x="211.00" y="854.00" width="4.00" height="1" fill="#3a3a3a"/>
<rect x="211.00" y="856.00" width="4.00" height="1" fill="#3a3a3a"/>
<rect x="207.00" y="858.00" width="8.00" height="1" fill="#2b2b2b"/>
<rect x="211.00" y="859.00" width="4.00" height="1" fill="#3a3a3a"/>
<rect x="211.00" y="861.00" width="4.00" height="1" fill="#3a3a3a"/>
<rect x="211.00" y="863.00" width="4.00" height="1" fill="#3a3a3a"/>
<rect x="211.00" y="865.00" width="4.00" height="1" fill="#3a3a3a"/>
<rect x="211.00" y="867.00" width="4.00" height="1" fill="#3a3a3a"/>
<rect x="211.00" y="869.00" width="4.00" height="1" fill="#3a3a3a"/>
<rect x="211.00" y="870.00" width="4.00" height="1" fill="#3a3a3a"/>
<rect x="211.00" y="872.00" width="4.00" height="1" fill="#3a3a3a"/>
<rect x="211.00" y="874.00" width="4.00" height="1" fill="#3a3a3a"/>
<rect x="207.00" y="876.00" width="8.00" height="1" fill="#2b2b2b"/>
<rect x="211.00" y="878.00" width="4.00" height="1" fill="#3a3a3a"/>
<rect x="211.00" y="880.00" width="4.00" height="1" fill="#3a3a3a"/>
<rect x="211.00" y="882.00" width="4.00" height="1" fill="#3a3a3a"/>
<rect x="211.00" y="883.00" width="4.00" height="1" fill="#3a3a3a"/>
<rect x="211.00" y="885.00" width="4.00" height="1" fill="#3a3a3a"/>
<rect x="211.00" y="887.00" width="4.00" height="1" fill="#3a3a3a"/>
<rect x="211.00" y="889.00" width="4.00" height="1" fill="#3a3a3a"/>
<rect x="211.00" y="891.00" width="4.00" height="1" fill="#3a3a3a"/>
<rect x="211.00" y="893.00" width="4.00" height="1" fill="#3a3a3a"/>
<rect x="207.00" y="894.00" width="8.00" height="1" fill="#2b2b2b"/>
<rect x="211.00" y="896.00" width="4.00" height="1" fill="#3a3a3a"/>
<rect x="211.00" y="898.00" width="4.00" height="1" fill="#3a3a3a"/>
<rect x="211.00" y="900.00" width="4.00" height="1" fill="#3a3a3a"/>
<rect x="211.00" y="902.00" width="4.00" height="1" fill="#3a3a3a"/>
<rect x="211.00" y="904.00" width="4.00" height="1" fill="#3a3a3a"/>
<rect x="211.00" y="905.00" width="4.00" height="1" fill="#3a3a3a"/>
<rect x="211.00" y="907.00" width="4.00" height="1" fill="#3a3a3a"/>
<rect x="211.00" y="909.00" width="4.00" height="1" fill="#3a3a3a"/>
<rect x="211.00" y="911.00" width="4.00" height="1" fill="#3a3a3a"/>
<rect x="207.00" y="913.00" width="8.00" height="1" fill="#2b2b2b"/>
<rect x="211.00" y="915.00" width="4.00" height="1" fill="#3a3a3a"/>
<rect x="211.00" y="916.00" width="4.00" height="1" fill="#3a3a3a"/>
<rect x="211.00" y="918.00" width="4.00" height="1" fill="#3a3a3a"/>
<rect x="211.00" y="920.00" width="4.00" height="1" fill="#3a3a3a"/>
<rect x="211.00" y="922.00" width="4.00" height="1" fill="#3a3a3a"/>
<rect x="211.00" y="924.00" width="4.00" height="1" fill="#3a3a3a"/>
<rect x="211.00" y="926.00" width="4.00" height="1" fill="#3a3a3a"/>
<rect x="211.00" y="927.00" width="4.00" height="1" fill="#3a3a3a"/>
<rect x="211.00" y="929.00" width="4.00" height="1" fill="#3a3a3a"/>
<rect x="207.00" y="931.00" width="8.00" height="1" fill="#2b2b2b"/>
<rect x="211.00" y="933.00" width="4.00" height="1" fill="#3a3a3a"/>
<rect x="211.00" y="935.00" width="4.00" height="1" fill="#3a3a3a"/>
<rect x="211.00" y="937.00" width="4.00" height="1" fill="#3a3a3a"/>
<rect x="211.00" y="938.00" width="4.00" height="1" fill="#3a3a3a"/>
<rect x="211.00" y="940.00" width="4.00" height="1" fill="#3a3a3a"/>
<rect x="211.00" y="942.00" width="4.00" height="1" fill="#3a3a3a"/>
<rect x="211.00" y="944.00" width="4.00" height="1" fill="#3a3a3a"/>
<rect x="211.00" y="946.00" width="4.00" height="1" fill="#3a3a3a"/>
<rect x="211.00" y="948.00" width="4.00" height="1" fill="#3a3a3a"/>
<rect x="207.00" y="949.00" width="8.00" height="1" fill="#2b2b2b"/>
<rect x="216.00" y="951.00" width="1" height="8.00" fill="#2b2b2b"/>
<rect x="234.00" y="951.00" width="1" height="4.00" fill="#2b2b2b"/>
<rect x="253.00" y="951.00" width="1" height="8.00" fill="#2b2b2b"/>
<rect x="272.00" y="951.00" width="1" height="4.00" fill="#2b2b2b"/>
<rect x="291.00" y="951.00" width="1" height="8.00" fill="#2b2b2b"/>
<rect x="309.00" y="951.00" width="1" height="4.00" fill="#2b2b2b"/>
<rect x="328.00" y="951.00" width="1" height="8.00" fill="#2b2b2b"/>
<rect x="347.00" y="951.00" width="1" height="4.00" fill="#2b2b2b"/>
<rect x="366.00" y="951.00" width="1" height="8.00" fill="#2b2b2b"/>
<g shape-rendering="auto" fill="none" stroke-linecap="butt">
<path d="M248.5 802.5 C246.4 805.9 239.2 816.0 236.0 823.0 C232.8 830.0 231.0 837.6 229.2 844.3 C227.4 851.0 226.0 858.2 225.3 863.0 C224.6 867.8 224.8 869.6 224.8 873.0 C224.8 876.4 224.9 878.3 225.3 883.4 C225.8 888.5 226.1 897.0 227.5 903.8 C228.9 910.6 231.1 918.0 233.5 924.2 C235.9 930.4 239.5 936.9 242.0 941.2 C244.5 945.5 247.4 948.5 248.5 950.0" stroke="#0000ff" stroke-width="1.1" stroke-dasharray="2.2 1.4"/>
<path d="M283.1 802.5 C281.4 803.9 275.9 808.0 272.6 811.1 C269.3 814.2 266.3 817.5 263.2 821.3 C260.1 825.1 256.7 829.4 253.9 834.1 C251.1 838.8 248.1 844.0 246.2 849.4 C244.3 854.8 243.1 861.3 242.3 866.4 C241.6 871.5 241.4 875.2 241.7 880.0 C242.0 884.8 242.8 890.5 244.0 895.3 C245.2 900.1 246.6 904.1 248.8 908.9 C251.0 913.7 254.2 919.7 257.3 924.2 C260.4 928.7 263.4 931.9 267.5 936.1 C271.6 940.3 279.5 947.3 281.9 949.5" stroke="#8b4513" stroke-width="1.1" stroke-dasharray="2.2 1.4"/>
<ellipse cx="292" cy="877.7" rx="36.8" ry="37.1" stroke="#000" stroke-width="1.15"/>
<ellipse cx="291.7" cy="877" rx="1.7" ry="1.3" stroke="#000" stroke-width="1"/>
<path d="M268.5 876.6 C267.6 877.7 264.7 880.9 262.9 883.4 C261.1 885.9 259.2 888.8 257.8 891.9 C256.4 895.0 255.4 898.7 254.7 902.1 C254.0 905.5 253.7 909.2 253.5 912.3 C253.3 915.4 253.2 918.0 253.5 920.8 C253.8 923.6 254.2 926.8 255.2 929.3 C256.2 931.8 257.8 934.1 259.5 936.1 C261.2 938.1 263.6 940.0 265.4 941.2 C267.2 942.4 269.6 943.0 270.5 943.4" stroke="#000" stroke-width="1.2"/>
<path d="M253.6 922 L255.9 928.5" stroke="#0000ff" stroke-width="4" stroke-linecap="round"/>
<path d="M249.0 916.3L258.0 925.3M249.0 925.3L258.0 916.3" stroke="#ff0000" stroke-width="1.1"/>
<rect x="320" y="854" width="4" height="4.5" fill="#ff0000" stroke="none"/>
</g>
<rect x="509.5" y="802.5" width="151" height="148" fill="#fff" stroke="#2b2b2b" stroke-width="1"/>
<rect x="501.00" y="803.00" width="8.00" height="1" fill="#2b2b2b"/>
<rect x="505.00" y="804.00" width="4.00" height="1" fill="#3a3a3a"/>
<rect x="505.00" y="806.00" width="4.00" height="1" fill="#3a3a3a"/>
<rect x="505.00" y="808.00" width="4.00" height="1" fill="#3a3a3a"/>
<rect x="505.00" y="810.00" width="4.00" height="1" fill="#3a3a3a"/>
<rect x="505.00" y="812.00" width="4.00" height="1" fill="#3a3a3a"/>
<rect x="505.00" y="814.00" width="4.00" height="1" fill="#3a3a3a"/>
<rect x="505.00" y="815.00" width="4.00" height="1" fill="#3a3a3a"/>
<rect x="505.00" y="817.00" width="4.00" height="1" fill="#3a3a3a"/>
<rect x="505.00" y="819.00" width="4.00" height="1" fill="#3a3a3a"/>
<rect x="501.00" y="821.00" width="8.00" height="1" fill="#2b2b2b"/>
<rect x="505.00" y="823.00" width="4.00" height="1" fill="#3a3a3a"/>
<rect x="505.00" y="825.00" width="4.00" height="1" fill="#3a3a3a"/>
<rect x="505.00" y="826.00" width="4.00" height="1" fill="#3a3a3a"/>
<rect x="505.00" y="828.00" width="4.00" height="1" fill="#3a3a3a"/>
<rect x="505.00" y="830.00" width="4.00" height="1" fill="#3a3a3a"/>
<rect x="505.00" y="832.00" width="4.00" height="1" fill="#3a3a3a"/>
<rect x="505.00" y="834.00" width="4.00" height="1" fill="#3a3a3a"/>
<rect x="505.00" y="836.00" width="4.00" height="1" fill="#3a3a3a"/>
<rect x="505.00" y="837.00" width="4.00" height="1" fill="#3a3a3a"/>
<rect x="501.00" y="839.00" width="8.00" height="1" fill="#2b2b2b"/>
<rect x="505.00" y="841.00" width="4.00" height="1" fill="#3a3a3a"/>
<rect x="505.00" y="843.00" width="4.00" height="1" fill="#3a3a3a"/>
<rect x="505.00" y="845.00" width="4.00" height="1" fill="#3a3a3a"/>
<rect x="505.00" y="847.00" width="4.00" height="1" fill="#3a3a3a"/>
<rect x="505.00" y="848.00" width="4.00" height="1" fill="#3a3a3a"/>
<rect x="505.00" y="850.00" width="4.00" height="1" fill="#3a3a3a"/>
<rect x="505.00" y="852.00" width="4.00" height="1" fill="#3a3a3a"/>
<rect x="505.00" y="854.00" width="4.00" height="1" fill="#3a3a3a"/>
<rect x="505.00" y="856.00" width="4.00" height="1" fill="#3a3a3a"/>
<rect x="501.00" y="858.00" width="8.00" height="1" fill="#2b2b2b"/>
<rect x="505.00" y="859.00" width="4.00" height="1" fill="#3a3a3a"/>
<rect x="505.00" y="861.00" width="4.00" height="1" fill="#3a3a3a"/>
<rect x="505.00" y="863.00" width="4.00" height="1" fill="#3a3a3a"/>
<rect x="505.00" y="865.00" width="4.00" height="1" fill="#3a3a3a"/>
<rect x="505.00" y="867.00" width="4.00" height="1" fill="#3a3a3a"/>
<rect x="505.00" y="869.00" width="4.00" height="1" fill="#3a3a3a"/>
<rect x="505.00" y="870.00" width="4.00" height="1" fill="#3a3a3a"/>
<rect x="505.00" y="872.00" width="4.00" height="1" fill="#3a3a3a"/>
<rect x="505.00" y="874.00" width="4.00" height="1" fill="#3a3a3a"/>
<rect x="501.00" y="876.00" width="8.00" height="1" fill="#2b2b2b"/>
<rect x="505.00" y="878.00" width="4.00" height="1" fill="#3a3a3a"/>
<rect x="505.00" y="880.00" width="4.00" height="1" fill="#3a3a3a"/>
<rect x="505.00" y="882.00" width="4.00" height="1" fill="#3a3a3a"/>
<rect x="505.00" y="883.00" width="4.00" height="1" fill="#3a3a3a"/>
<rect x="505.00" y="885.00" width="4.00" height="1" fill="#3a3a3a"/>
<rect x="505.00" y="887.00" width="4.00" height="1" fill="#3a3a3a"/>
<rect x="505.00" y="889.00" width="4.00" height="1" fill="#3a3a3a"/>
<rect x="505.00" y="891.00" width="4.00" height="1" fill="#3a3a3a"/>
<rect x="505.00" y="893.00" width="4.00" height="1" fill="#3a3a3a"/>
<rect x="501.00" y="894.00" width="8.00" height="1" fill="#2b2b2b"/>
<rect x="505.00" y="896.00" width="4.00" height="1" fill="#3a3a3a"/>
<rect x="505.00" y="898.00" width="4.00" height="1" fill="#3a3a3a"/>
<rect x="505.00" y="900.00" width="4.00" height="1" fill="#3a3a3a"/>
<rect x="505.00" y="902.00" width="4.00" height="1" fill="#3a3a3a"/>
<rect x="505.00" y="904.00" width="4.00" height="1" fill="#3a3a3a"/>
<rect x="505.00" y="905.00" width="4.00" height="1" fill="#3a3a3a"/>
<rect x="505.00" y="907.00" width="4.00" height="1" fill="#3a3a3a"/>
<rect x="505.00" y="909.00" width="4.00" height="1" fill="#3a3a3a"/>
<rect x="505.00" y="911.00" width="4.00" height="1" fill="#3a3a3a"/>
<rect x="501.00" y="913.00" width="8.00" height="1" fill="#2b2b2b"/>
<rect x="505.00" y="915.00" width="4.00" height="1" fill="#3a3a3a"/>
<rect x="505.00" y="916.00" width="4.00" height="1" fill="#3a3a3a"/>
<rect x="505.00" y="918.00" width="4.00" height="1" fill="#3a3a3a"/>
<rect x="505.00" y="920.00" width="4.00" height="1" fill="#3a3a3a"/>
<rect x="505.00" y="922.00" width="4.00" height="1" fill="#3a3a3a"/>
<rect x="505.00" y="924.00" width="4.00" height="1" fill="#3a3a3a"/>
<rect x="505.00" y="926.00" width="4.00" height="1" fill="#3a3a3a"/>
<rect x="505.00" y="927.00" width="4.00" height="1" fill="#3a3a3a"/>
<rect x="505.00" y="929.00" width="4.00" height="1" fill="#3a3a3a"/>
<rect x="501.00" y="931.00" width="8.00" height="1" fill="#2b2b2b"/>
<rect x="505.00" y="933.00" width="4.00" height="1" fill="#3a3a3a"/>
<rect x="505.00" y="935.00" width="4.00" height="1" fill="#3a3a3a"/>
<rect x="505.00" y="937.00" width="4.00" height="1" fill="#3a3a3a"/>
<rect x="505.00" y="938.00" width="4.00" height="1" fill="#3a3a3a"/>
<rect x="505.00" y="940.00" width="4.00" height="1" fill="#3a3a3a"/>
<rect x="505.00" y="942.00" width="4.00" height="1" fill="#3a3a3a"/>
<rect x="505.00" y="944.00" width="4.00" height="1" fill="#3a3a3a"/>
<rect x="505.00" y="946.00" width="4.00" height="1" fill="#3a3a3a"/>
<rect x="505.00" y="948.00" width="4.00" height="1" fill="#3a3a3a"/>
<rect x="501.00" y="949.00" width="8.00" height="1" fill="#2b2b2b"/>
<rect x="510.00" y="951.00" width="1" height="8.00" fill="#2b2b2b"/>
<rect x="528.00" y="951.00" width="1" height="4.00" fill="#2b2b2b"/>
<rect x="547.00" y="951.00" width="1" height="8.00" fill="#2b2b2b"/>
<rect x="566.00" y="951.00" width="1" height="4.00" fill="#2b2b2b"/>
<rect x="585.00" y="951.00" width="1" height="8.00" fill="#2b2b2b"/>
<rect x="603.00" y="951.00" width="1" height="4.00" fill="#2b2b2b"/>
<rect x="622.00" y="951.00" width="1" height="8.00" fill="#2b2b2b"/>
<rect x="641.00" y="951.00" width="1" height="4.00" fill="#2b2b2b"/>
<rect x="660.00" y="951.00" width="1" height="8.00" fill="#2b2b2b"/>
<g shape-rendering="auto" fill="none" stroke-linecap="butt">
<path d="M542.5 802.5 C540.4 805.9 533.2 816.0 530.0 823.0 C526.8 830.0 525.0 837.6 523.2 844.3 C521.4 851.0 520.0 858.2 519.3 863.0 C518.6 867.8 518.8 869.6 518.8 873.0 C518.8 876.4 518.8 878.3 519.3 883.4 C519.8 888.5 520.1 897.0 521.5 903.8 C522.9 910.6 525.1 918.0 527.5 924.2 C529.9 930.4 533.5 936.9 536.0 941.2 C538.5 945.5 541.4 948.5 542.5 950.0" stroke="#0000ff" stroke-width="1.1" stroke-dasharray="2.2 1.4"/>
<path d="M577.1 802.5 C575.4 803.9 569.9 808.0 566.6 811.1 C563.3 814.2 560.3 817.5 557.2 821.3 C554.1 825.1 550.7 829.4 547.9 834.1 C545.1 838.8 542.1 844.0 540.2 849.4 C538.3 854.8 537.0 861.3 536.3 866.4 C535.5 871.5 535.4 875.2 535.7 880.0 C536.0 884.8 536.8 890.5 538.0 895.3 C539.2 900.1 540.6 904.1 542.8 908.9 C545.0 913.7 548.2 919.7 551.3 924.2 C554.4 928.7 557.4 931.9 561.5 936.1 C565.6 940.3 573.5 947.3 575.9 949.5" stroke="#8b4513" stroke-width="1.1" stroke-dasharray="2.2 1.4"/>
<path d="M550.1 885.6 L622.7 866.7" stroke="#000" stroke-width="1.7"/>
<ellipse cx="585.3" cy="877.1" rx="1.7" ry="1.3" stroke="#000" stroke-width="1" fill="#fff"/>
<path d="M562.5 877.4 C561.6 877.8 558.6 879.0 557.0 880.0 C555.4 881.0 554.0 882.0 552.6 883.4 C551.2 884.8 549.6 886.2 548.7 888.5 C547.9 890.8 547.6 894.5 547.5 897.0 C547.4 899.5 547.3 901.8 548.0 903.8 C548.7 905.8 550.2 907.4 551.8 908.9 C553.4 910.4 555.6 911.9 557.7 912.8 C559.8 913.7 563.4 914.2 564.5 914.5" stroke="#000" stroke-width="1.2"/>
<path d="M548 903 L550.5 906.5" stroke="#0000ff" stroke-width="4" stroke-linecap="round"/>
<path d="M543.0 897.2L552.0 906.2M543.0 906.2L552.0 897.2" stroke="#ff0000" stroke-width="1.1"/>
<rect x="614" y="866.4" width="4" height="4.5" fill="#ff0000" stroke="none"/>
</g>
<rect x="803.5" y="802.5" width="151" height="148" fill="#fff" stroke="#2b2b2b" stroke-width="1"/>
<rect x="795.00" y="803.00" width="8.00" height="1" fill="#2b2b2b"/>
<rect x="799.00" y="804.00" width="4.00" height="1" fill="#3a3a3a"/>
<rect x="799.00" y="806.00" width="4.00" height="1" fill="#3a3a3a"/>
<rect x="799.00" y="808.00" width="4.00" height="1" fill="#3a3a3a"/>
<rect x="799.00" y="810.00" width="4.00" height="1" fill="#3a3a3a"/>
<rect x="799.00" y="812.00" width="4.00" height="1" fill="#3a3a3a"/>
<rect x="799.00" y="814.00" width="4.00" height="1" fill="#3a3a3a"/>
<rect x="799.00" y="815.00" width="4.00" height="1" fill="#3a3a3a"/>
<rect x="799.00" y="817.00" width="4.00" height="1" fill="#3a3a3a"/>
<rect x="799.00" y="819.00" width="4.00" height="1" fill="#3a3a3a"/>
<rect x="795.00" y="821.00" width="8.00" height="1" fill="#2b2b2b"/>
<rect x="799.00" y="823.00" width="4.00" height="1" fill="#3a3a3a"/>
<rect x="799.00" y="825.00" width="4.00" height="1" fill="#3a3a3a"/>
<rect x="799.00" y="826.00" width="4.00" height="1" fill="#3a3a3a"/>
<rect x="799.00" y="828.00" width="4.00" height="1" fill="#3a3a3a"/>
<rect x="799.00" y="830.00" width="4.00" height="1" fill="#3a3a3a"/>
<rect x="799.00" y="832.00" width="4.00" height="1" fill="#3a3a3a"/>
<rect x="799.00" y="834.00" width="4.00" height="1" fill="#3a3a3a"/>
<rect x="799.00" y="836.00" width="4.00" height="1" fill="#3a3a3a"/>
<rect x="799.00" y="837.00" width="4.00" height="1" fill="#3a3a3a"/>
<rect x="795.00" y="839.00" width="8.00" height="1" fill="#2b2b2b"/>
<rect x="799.00" y="841.00" width="4.00" height="1" fill="#3a3a3a"/>
<rect x="799.00" y="843.00" width="4.00" height="1" fill="#3a3a3a"/>
<rect x="799.00" y="845.00" width="4.00" height="1" fill="#3a3a3a"/>
<rect x="799.00" y="847.00" width="4.00" height="1" fill="#3a3a3a"/>
<rect x="799.00" y="848.00" width="4.00" height="1" fill="#3a3a3a"/>
<rect x="799.00" y="850.00" width="4.00" height="1" fill="#3a3a3a"/>
<rect x="799.00" y="852.00" width="4.00" height="1" fill="#3a3a3a"/>
<rect x="799.00" y="854.00" width="4.00" height="1" fill="#3a3a3a"/>
<rect x="799.00" y="856.00" width="4.00" height="1" fill="#3a3a3a"/>
<rect x="795.00" y="858.00" width="8.00" height="1" fill="#2b2b2b"/>
<rect x="799.00" y="859.00" width="4.00" height="1" fill="#3a3a3a"/>
<rect x="799.00" y="861.00" width="4.00" height="1" fill="#3a3a3a"/>
<rect x="799.00" y="863.00" width="4.00" height="1" fill="#3a3a3a"/>
<rect x="799.00" y="865.00" width="4.00" height="1" fill="#3a3a3a"/>
<rect x="799.00" y="867.00" width="4.00" height="1" fill="#3a3a3a"/>
<rect x="799.00" y="869.00" width="4.00" height="1" fill="#3a3a3a"/>
<rect x="799.00" y="870.00" width="4.00" height="1" fill="#3a3a3a"/>
<rect x="799.00" y="872.00" width="4.00" height="1" fill="#3a3a3a"/>
<rect x="799.00" y="874.00" width="4.00" height="1" fill="#3a3a3a"/>
<rect x="795.00" y="876.00" width="8.00" height="1" fill="#2b2b2b"/>
<rect x="799.00" y="878.00" width="4.00" height="1" fill="#3a3a3a"/>
<rect x="799.00" y="880.00" width="4.00" height="1" fill="#3a3a3a"/>
<rect x="799.00" y="882.00" width="4.00" height="1" fill="#3a3a3a"/>
<rect x="799.00" y="883.00" width="4.00" height="1" fill="#3a3a3a"/>
<rect x="799.00" y="885.00" width="4.00" height="1" fill="#3a3a3a"/>
<rect x="799.00" y="887.00" width="4.00" height="1" fill="#3a3a3a"/>
<rect x="799.00" y="889.00" width="4.00" height="1" fill="#3a3a3a"/>
<rect x="799.00" y="891.00" width="4.00" height="1" fill="#3a3a3a"/>
<rect x="799.00" y="893.00" width="4.00" height="1" fill="#3a3a3a"/>
<rect x="795.00" y="894.00" width="8.00" height="1" fill="#2b2b2b"/>
<rect x="799.00" y="896.00" width="4.00" height="1" fill="#3a3a3a"/>
<rect x="799.00" y="898.00" width="4.00" height="1" fill="#3a3a3a"/>
<rect x="799.00" y="900.00" width="4.00" height="1" fill="#3a3a3a"/>
<rect x="799.00" y="902.00" width="4.00" height="1" fill="#3a3a3a"/>
<rect x="799.00" y="904.00" width="4.00" height="1" fill="#3a3a3a"/>
<rect x="799.00" y="905.00" width="4.00" height="1" fill="#3a3a3a"/>
<rect x="799.00" y="907.00" width="4.00" height="1" fill="#3a3a3a"/>
<rect x="799.00" y="909.00" width="4.00" height="1" fill="#3a3a3a"/>
<rect x="799.00" y="911.00" width="4.00" height="1" fill="#3a3a3a"/>
<rect x="795.00" y="913.00" width="8.00" height="1" fill="#2b2b2b"/>
<rect x="799.00" y="915.00" width="4.00" height="1" fill="#3a3a3a"/>
<rect x="799.00" y="916.00" width="4.00" height="1" fill="#3a3a3a"/>
<rect x="799.00" y="918.00" width="4.00" height="1" fill="#3a3a3a"/>
<rect x="799.00" y="920.00" width="4.00" height="1" fill="#3a3a3a"/>
<rect x="799.00" y="922.00" width="4.00" height="1" fill="#3a3a3a"/>
<rect x="799.00" y="924.00" width="4.00" height="1" fill="#3a3a3a"/>
<rect x="799.00" y="926.00" width="4.00" height="1" fill="#3a3a3a"/>
<rect x="799.00" y="927.00" width="4.00" height="1" fill="#3a3a3a"/>
<rect x="799.00" y="929.00" width="4.00" height="1" fill="#3a3a3a"/>
<rect x="795.00" y="931.00" width="8.00" height="1" fill="#2b2b2b"/>
<rect x="799.00" y="933.00" width="4.00" height="1" fill="#3a3a3a"/>
<rect x="799.00" y="935.00" width="4.00" height="1" fill="#3a3a3a"/>
<rect x="799.00" y="937.00" width="4.00" height="1" fill="#3a3a3a"/>
<rect x="799.00" y="938.00" width="4.00" height="1" fill="#3a3a3a"/>
<rect x="799.00" y="940.00" width="4.00" height="1" fill="#3a3a3a"/>
<rect x="799.00" y="942.00" width="4.00" height="1" fill="#3a3a3a"/>
<rect x="799.00" y="944.00" width="4.00" height="1" fill="#3a3a3a"/>
<rect x="799.00" y="946.00" width="4.00" height="1" fill="#3a3a3a"/>
<rect x="799.00" y="948.00" width="4.00" height="1" fill="#3a3a3a"/>
<rect x="795.00" y="949.00" width="8.00" height="1" fill="#2b2b2b"/>
<rect x="804.00" y="951.00" width="1" height="8.00" fill="#2b2b2b"/>
<rect x="822.00" y="951.00" width="1" height="4.00" fill="#2b2b2b"/>
<rect x="841.00" y="951.00" width="1" height="8.00" fill="#2b2b2b"/>
<rect x="860.00" y="951.00" width="1" height="4.00" fill="#2b2b2b"/>
<rect x="879.00" y="951.00" width="1" height="8.00" fill="#2b2b2b"/>
<rect x="897.00" y="951.00" width="1" height="4.00" fill="#2b2b2b"/>
<rect x="916.00" y="951.00" width="1" height="8.00" fill="#2b2b2b"/>
<rect x="935.00" y="951.00" width="1" height="4.00" fill="#2b2b2b"/>
<rect x="954.00" y="951.00" width="1" height="8.00" fill="#2b2b2b"/>
<g shape-rendering="auto" fill="none" stroke-linecap="butt">
<clipPath id="c3"><rect x="804" y="802.6" width="150" height="147.6"/></clipPath>
<circle cx="879.1" cy="876.7" r="82.4" stroke="#0000ff" stroke-width="1.1" stroke-dasharray="2.2 1.4" clip-path="url(#c3)"/>
<circle cx="879.2" cy="876.5" r="41" stroke="#8b4513" stroke-width="1.1" stroke-dasharray="2.2 1.4"/>
<ellipse cx="880.3" cy="876.5" rx="38.2" ry="9.9" stroke="#000" stroke-width="1.15"/>
<path d="M879.1 876.9 L947.3 914.6" stroke="#000" stroke-width="1.05"/>
<ellipse cx="879.1" cy="876.7" rx="1.7" ry="1.3" stroke="#000" stroke-width="1" fill="#fff"/>
<path d="M925 902.2 L932.2 906.2" stroke="#0000ff" stroke-width="4" stroke-linecap="round"/>
<path d="M919.9 897.1L928.9 906.1M919.9 906.1L928.9 897.1" stroke="#ff0000" stroke-width="1.1"/>
<circle cx="858.1" cy="868.4" r="2.4" fill="#ff0000" stroke="none"/>
</g>
<g opacity="0.99" shape-rendering="auto">
<text x="587.2" y="19.2" font-size="12" text-anchor="middle" textLength="281.4" lengthAdjust="spacingAndGlyphs" fill="#424242" xml:space="preserve" style="white-space:pre">LEMMS and CHEMS Particle Pressures  2012:231</text>
<text x="75.3" y="66.1" font-size="11" text-anchor="start" textLength="7.0" lengthAdjust="spacingAndGlyphs" fill="#424242" >2</text>
<text x="60.1" y="71.8" font-size="12" text-anchor="start" textLength="13.6" lengthAdjust="spacingAndGlyphs" fill="#424242" >10</text>
<text x="75.3" y="162.6" font-size="11" text-anchor="start" textLength="7.0" lengthAdjust="spacingAndGlyphs" fill="#424242" >1</text>
<text x="60.1" y="168.3" font-size="12" text-anchor="start" textLength="13.6" lengthAdjust="spacingAndGlyphs" fill="#424242" >10</text>
<text x="10.5" y="28.8" font-size="12" text-anchor="start" textLength="58.0" lengthAdjust="spacingAndGlyphs" fill="#424242" >CHEMS Pr.</text>
<text x="10.5" y="211.0" font-size="12" text-anchor="start" textLength="57.0" lengthAdjust="spacingAndGlyphs" fill="#424242" >LEMMS Pr.</text>
<text x="48.6" y="124.6" font-size="12" text-anchor="middle" textLength="71.5" lengthAdjust="spacingAndGlyphs" transform="rotate(-90 48.6 124.6)" fill="#424242" >Energy (keV)</text>
<text x="1117.2" y="36.5" font-size="12" text-anchor="start" textLength="13.6" lengthAdjust="spacingAndGlyphs" fill="#424242" >10</text>
<text x="1131.6" y="30.7" font-size="11" text-anchor="start" textLength="14.2" lengthAdjust="spacingAndGlyphs" fill="#424242" >−9</text>
<text x="1117.2" y="94.2" font-size="12" text-anchor="start" textLength="13.6" lengthAdjust="spacingAndGlyphs" fill="#424242" >10</text>
<text x="1131.6" y="88.4" font-size="11" text-anchor="start" textLength="22.2" lengthAdjust="spacingAndGlyphs" fill="#424242" >−10</text>
<text x="1117.2" y="151.9" font-size="12" text-anchor="start" textLength="13.6" lengthAdjust="spacingAndGlyphs" fill="#424242" >10</text>
<text x="1131.6" y="146.1" font-size="11" text-anchor="start" textLength="22.2" lengthAdjust="spacingAndGlyphs" fill="#424242" >−11</text>
<text x="1117.2" y="209.6" font-size="12" text-anchor="start" textLength="13.6" lengthAdjust="spacingAndGlyphs" fill="#424242" >10</text>
<text x="1131.6" y="203.8" font-size="11" text-anchor="start" textLength="22.2" lengthAdjust="spacingAndGlyphs" fill="#424242" >−12</text>
<text x="1165.6" y="123.0" font-size="12" text-anchor="middle" textLength="120.0" lengthAdjust="spacingAndGlyphs" transform="rotate(90 1165.6 123.0)" fill="#424242" >pressure dyne/cm^2</text>
<text x="1117.2" y="232.5" font-size="12" text-anchor="start" textLength="13.6" lengthAdjust="spacingAndGlyphs" fill="#424242" >10</text>
<text x="1131.6" y="226.7" font-size="11" text-anchor="start" textLength="14.2" lengthAdjust="spacingAndGlyphs" fill="#424242" >−9</text>
<text x="1117.2" y="290.2" font-size="12" text-anchor="start" textLength="13.6" lengthAdjust="spacingAndGlyphs" fill="#424242" >10</text>
<text x="1131.6" y="284.4" font-size="11" text-anchor="start" textLength="22.2" lengthAdjust="spacingAndGlyphs" fill="#424242" >−10</text>
<text x="1117.2" y="347.9" font-size="12" text-anchor="start" textLength="13.6" lengthAdjust="spacingAndGlyphs" fill="#424242" >10</text>
<text x="1131.6" y="342.1" font-size="11" text-anchor="start" textLength="22.2" lengthAdjust="spacingAndGlyphs" fill="#424242" >−11</text>
<text x="1117.2" y="405.6" font-size="12" text-anchor="start" textLength="13.6" lengthAdjust="spacingAndGlyphs" fill="#424242" >10</text>
<text x="1131.6" y="399.8" font-size="11" text-anchor="start" textLength="22.2" lengthAdjust="spacingAndGlyphs" fill="#424242" >−12</text>
<text x="1165.6" y="319.0" font-size="12" text-anchor="middle" textLength="120.0" lengthAdjust="spacingAndGlyphs" transform="rotate(90 1165.6 319.0)" fill="#424242" >pressure dyne/cm^2</text>
<text x="82.2" y="233.9" font-size="12" text-anchor="end" textLength="26.6" lengthAdjust="spacingAndGlyphs" fill="#424242" >700.</text>
<text x="82.2" y="242.6" font-size="12" text-anchor="end" textLength="26.6" lengthAdjust="spacingAndGlyphs" fill="#424242" >600.</text>
<text x="82.2" y="252.9" font-size="12" text-anchor="end" textLength="26.6" lengthAdjust="spacingAndGlyphs" fill="#424242" >500.</text>
<text x="82.2" y="265.5" font-size="12" text-anchor="end" textLength="26.6" lengthAdjust="spacingAndGlyphs" fill="#424242" >400.</text>
<text x="82.2" y="281.7" font-size="12" text-anchor="end" textLength="26.6" lengthAdjust="spacingAndGlyphs" fill="#424242" >300.</text>
<text x="82.2" y="304.6" font-size="12" text-anchor="end" textLength="26.6" lengthAdjust="spacingAndGlyphs" fill="#424242" >200.</text>
<text x="82.2" y="343.7" font-size="12" text-anchor="end" textLength="26.6" lengthAdjust="spacingAndGlyphs" fill="#424242" >100.</text>
<text x="44.6" y="320.5" font-size="12" text-anchor="middle" textLength="71.5" lengthAdjust="spacingAndGlyphs" transform="rotate(-90 44.6 320.5)" fill="#424242" >Energy (keV)</text>
<text x="69.0" y="438.1" font-size="11" text-anchor="start" textLength="13.2" lengthAdjust="spacingAndGlyphs" fill="#424242" >−9</text>
<text x="53.4" y="443.9" font-size="12" text-anchor="start" textLength="13.6" lengthAdjust="spacingAndGlyphs" fill="#424242" >10</text>
<text x="60.6" y="460.2" font-size="11" text-anchor="start" textLength="21.6" lengthAdjust="spacingAndGlyphs" fill="#424242" >−10</text>
<text x="45.0" y="466.0" font-size="12" text-anchor="start" textLength="13.6" lengthAdjust="spacingAndGlyphs" fill="#424242" >10</text>
<text x="60.6" y="482.2" font-size="11" text-anchor="start" textLength="21.6" lengthAdjust="spacingAndGlyphs" fill="#424242" >−11</text>
<text x="45.0" y="488.0" font-size="12" text-anchor="start" textLength="13.6" lengthAdjust="spacingAndGlyphs" fill="#424242" >10</text>
<text x="60.6" y="504.3" font-size="11" text-anchor="start" textLength="21.6" lengthAdjust="spacingAndGlyphs" fill="#424242" >−12</text>
<text x="45.0" y="510.1" font-size="12" text-anchor="start" textLength="13.6" lengthAdjust="spacingAndGlyphs" fill="#424242" >10</text>
<text x="34.6" y="466.0" font-size="12" text-anchor="middle" textLength="68.0" lengthAdjust="spacingAndGlyphs" transform="rotate(-90 34.6 466.0)" fill="#424242" >P dyn/cm^2</text>
<text x="1107.7" y="434.0" font-size="12" text-anchor="start" textLength="52.0" lengthAdjust="spacingAndGlyphs" fill="#424242" >CHEMS-P</text>
<text x="1107.7" y="451.1" font-size="12" text-anchor="start" textLength="51.0" lengthAdjust="spacingAndGlyphs" fill="#424242" >LEMMS-P</text>
<text x="1107.7" y="468.3" font-size="12" text-anchor="start" textLength="54.3" lengthAdjust="spacingAndGlyphs" fill="#424242" >CHEMS-O</text>
<text x="75.4" y="556.3" font-size="11" text-anchor="start" textLength="6.8" lengthAdjust="spacingAndGlyphs" fill="#424242" >4</text>
<text x="60.6" y="562.1" font-size="12" text-anchor="start" textLength="13.6" lengthAdjust="spacingAndGlyphs" fill="#424242" >10</text>
<text x="75.4" y="608.6" font-size="11" text-anchor="start" textLength="6.8" lengthAdjust="spacingAndGlyphs" fill="#424242" >3</text>
<text x="60.6" y="614.4" font-size="12" text-anchor="start" textLength="13.6" lengthAdjust="spacingAndGlyphs" fill="#424242" >10</text>
<text x="75.4" y="660.8" font-size="11" text-anchor="start" textLength="6.8" lengthAdjust="spacingAndGlyphs" fill="#424242" >2</text>
<text x="60.6" y="666.6" font-size="12" text-anchor="start" textLength="13.6" lengthAdjust="spacingAndGlyphs" fill="#424242" >10</text>
<text x="9.3" y="538.0" font-size="12" text-anchor="start" textLength="65.0" lengthAdjust="spacingAndGlyphs" fill="#424242" >LEMMS Ions</text>
<text x="48.4" y="602.5" font-size="12" text-anchor="middle" textLength="71.5" lengthAdjust="spacingAndGlyphs" transform="rotate(-90 48.4 602.5)" fill="#424242" >Energy (keV)</text>
<text x="1117.2" y="522.9" font-size="12" text-anchor="start" textLength="13.6" lengthAdjust="spacingAndGlyphs" fill="#424242" >10</text>
<text x="1131.6" y="517.1" font-size="11" text-anchor="start" textLength="6.8" lengthAdjust="spacingAndGlyphs" fill="#424242" >4</text>
<text x="1117.2" y="561.9" font-size="12" text-anchor="start" textLength="13.6" lengthAdjust="spacingAndGlyphs" fill="#424242" >10</text>
<text x="1131.6" y="556.1" font-size="11" text-anchor="start" textLength="6.8" lengthAdjust="spacingAndGlyphs" fill="#424242" >2</text>
<text x="1117.2" y="600.9" font-size="12" text-anchor="start" textLength="13.6" lengthAdjust="spacingAndGlyphs" fill="#424242" >10</text>
<text x="1131.6" y="595.1" font-size="11" text-anchor="start" textLength="6.8" lengthAdjust="spacingAndGlyphs" fill="#424242" >0</text>
<text x="1117.2" y="639.9" font-size="12" text-anchor="start" textLength="13.6" lengthAdjust="spacingAndGlyphs" fill="#424242" >10</text>
<text x="1131.6" y="634.1" font-size="11" text-anchor="start" textLength="13.6" lengthAdjust="spacingAndGlyphs" fill="#424242" >−2</text>
<text x="1117.2" y="678.9" font-size="12" text-anchor="start" textLength="13.6" lengthAdjust="spacingAndGlyphs" fill="#424242" >10</text>
<text x="1131.6" y="673.1" font-size="11" text-anchor="start" textLength="13.6" lengthAdjust="spacingAndGlyphs" fill="#424242" >−4</text>
<text x="1157.0" y="602.3" font-size="12" text-anchor="middle" textLength="167.3" lengthAdjust="spacingAndGlyphs" transform="rotate(90 1157.0 602.3)" fill="#424242" >intensity 1/(s cm^2 ster keV)</text>
<text x="78.4" y="707.6" font-size="12" text-anchor="end" textLength="48.5" lengthAdjust="spacingAndGlyphs" fill="#424242" >Sunlight?</text>
<text x="217.9" y="733.6" font-size="12" text-anchor="middle" textLength="35.0" lengthAdjust="spacingAndGlyphs" fill="#424242" >03:00</text>
<text x="217.9" y="748.6" font-size="12" text-anchor="middle" textLength="33.6" lengthAdjust="spacingAndGlyphs" fill="#424242" >14.75</text>
<text x="217.9" y="763.6" font-size="12" text-anchor="middle" textLength="33.6" lengthAdjust="spacingAndGlyphs" fill="#424242" >34.70</text>
<text x="217.9" y="778.6" font-size="12" text-anchor="middle" textLength="33.6" lengthAdjust="spacingAndGlyphs" fill="#424242" >59.19</text>
<text x="340.9" y="733.6" font-size="12" text-anchor="middle" textLength="35.0" lengthAdjust="spacingAndGlyphs" fill="#424242" >06:00</text>
<text x="340.9" y="748.6" font-size="12" text-anchor="middle" textLength="33.6" lengthAdjust="spacingAndGlyphs" fill="#424242" >14.79</text>
<text x="340.9" y="763.6" font-size="12" text-anchor="middle" textLength="33.6" lengthAdjust="spacingAndGlyphs" fill="#424242" >35.11</text>
<text x="340.9" y="778.6" font-size="12" text-anchor="middle" textLength="33.6" lengthAdjust="spacingAndGlyphs" fill="#424242" >60.57</text>
<text x="463.9" y="733.6" font-size="12" text-anchor="middle" textLength="35.0" lengthAdjust="spacingAndGlyphs" fill="#424242" >09:00</text>
<text x="463.9" y="748.6" font-size="12" text-anchor="middle" textLength="33.6" lengthAdjust="spacingAndGlyphs" fill="#424242" >14.84</text>
<text x="463.9" y="763.6" font-size="12" text-anchor="middle" textLength="33.6" lengthAdjust="spacingAndGlyphs" fill="#424242" >35.51</text>
<text x="463.9" y="778.6" font-size="12" text-anchor="middle" textLength="33.6" lengthAdjust="spacingAndGlyphs" fill="#424242" >61.94</text>
<text x="586.9" y="733.6" font-size="12" text-anchor="middle" textLength="35.0" lengthAdjust="spacingAndGlyphs" fill="#424242" >12:00</text>
<text x="586.9" y="748.6" font-size="12" text-anchor="middle" textLength="33.6" lengthAdjust="spacingAndGlyphs" fill="#424242" >14.89</text>
<text x="586.9" y="763.6" font-size="12" text-anchor="middle" textLength="33.6" lengthAdjust="spacingAndGlyphs" fill="#424242" >35.89</text>
<text x="586.9" y="778.6" font-size="12" text-anchor="middle" textLength="33.6" lengthAdjust="spacingAndGlyphs" fill="#424242" >63.30</text>
<text x="709.9" y="733.6" font-size="12" text-anchor="middle" textLength="35.0" lengthAdjust="spacingAndGlyphs" fill="#424242" >15:00</text>
<text x="709.9" y="748.6" font-size="12" text-anchor="middle" textLength="33.6" lengthAdjust="spacingAndGlyphs" fill="#424242" >14.93</text>
<text x="709.9" y="763.6" font-size="12" text-anchor="middle" textLength="33.6" lengthAdjust="spacingAndGlyphs" fill="#424242" >36.27</text>
<text x="709.9" y="778.6" font-size="12" text-anchor="middle" textLength="33.6" lengthAdjust="spacingAndGlyphs" fill="#424242" >64.64</text>
<text x="832.9" y="733.6" font-size="12" text-anchor="middle" textLength="35.0" lengthAdjust="spacingAndGlyphs" fill="#424242" >18:00</text>
<text x="832.9" y="748.6" font-size="12" text-anchor="middle" textLength="33.6" lengthAdjust="spacingAndGlyphs" fill="#424242" >14.98</text>
<text x="832.9" y="763.6" font-size="12" text-anchor="middle" textLength="33.6" lengthAdjust="spacingAndGlyphs" fill="#424242" >36.63</text>
<text x="832.9" y="778.6" font-size="12" text-anchor="middle" textLength="33.6" lengthAdjust="spacingAndGlyphs" fill="#424242" >65.97</text>
<text x="955.9" y="733.6" font-size="12" text-anchor="middle" textLength="35.0" lengthAdjust="spacingAndGlyphs" fill="#424242" >21:00</text>
<text x="955.9" y="748.6" font-size="12" text-anchor="middle" textLength="33.6" lengthAdjust="spacingAndGlyphs" fill="#424242" >15.03</text>
<text x="955.9" y="763.6" font-size="12" text-anchor="middle" textLength="33.6" lengthAdjust="spacingAndGlyphs" fill="#424242" >36.98</text>
<text x="955.9" y="778.6" font-size="12" text-anchor="middle" textLength="33.6" lengthAdjust="spacingAndGlyphs" fill="#424242" >67.29</text>
<text x="1080.0" y="733.6" font-size="12" text-anchor="middle" textLength="35.0" lengthAdjust="spacingAndGlyphs" fill="#424242" >00:00</text>
<text x="1080.0" y="748.6" font-size="12" text-anchor="middle" textLength="33.6" lengthAdjust="spacingAndGlyphs" fill="#424242" >15.07</text>
<text x="1080.0" y="763.6" font-size="12" text-anchor="middle" textLength="33.6" lengthAdjust="spacingAndGlyphs" fill="#424242" >37.32</text>
<text x="1080.0" y="778.6" font-size="12" text-anchor="middle" textLength="33.6" lengthAdjust="spacingAndGlyphs" fill="#424242" >68.59</text>
<text x="60.0" y="748.6" font-size="12" text-anchor="end" textLength="43.3" lengthAdjust="spacingAndGlyphs" fill="#424242" >LT (hrs)</text>
<text x="60.0" y="763.6" font-size="12" text-anchor="end" textLength="13.3" lengthAdjust="spacingAndGlyphs" fill="#424242" >Rs</text>
<text x="60.0" y="778.4" font-size="12" text-anchor="end" textLength="46.7" lengthAdjust="spacingAndGlyphs" fill="#424242" >Dipole L</text>
<text x="201.5" y="807.9" font-size="12" text-anchor="end" textLength="23.8" lengthAdjust="spacingAndGlyphs" fill="#424242" >-40.</text>
<text x="201.5" y="825.9" font-size="12" text-anchor="end" textLength="23.8" lengthAdjust="spacingAndGlyphs" fill="#424242" >-30.</text>
<text x="201.5" y="843.9" font-size="12" text-anchor="end" textLength="23.8" lengthAdjust="spacingAndGlyphs" fill="#424242" >-20.</text>
<text x="201.5" y="862.9" font-size="12" text-anchor="end" textLength="23.8" lengthAdjust="spacingAndGlyphs" fill="#424242" >-10.</text>
<text x="201.5" y="880.9" font-size="12" text-anchor="end" textLength="10.7" lengthAdjust="spacingAndGlyphs" fill="#424242" >0.</text>
<text x="201.5" y="898.9" font-size="12" text-anchor="end" textLength="18.4" lengthAdjust="spacingAndGlyphs" fill="#424242" >10.</text>
<text x="201.5" y="917.9" font-size="12" text-anchor="end" textLength="18.4" lengthAdjust="spacingAndGlyphs" fill="#424242" >20.</text>
<text x="201.5" y="935.9" font-size="12" text-anchor="end" textLength="18.4" lengthAdjust="spacingAndGlyphs" fill="#424242" >30.</text>
<text x="201.5" y="953.9" font-size="12" text-anchor="end" textLength="18.4" lengthAdjust="spacingAndGlyphs" fill="#424242" >40.</text>
<text x="216.0" y="973.0" font-size="12" text-anchor="middle" textLength="18.4" lengthAdjust="spacingAndGlyphs" fill="#424242" >40.</text>
<text x="253.0" y="973.0" font-size="12" text-anchor="middle" textLength="18.4" lengthAdjust="spacingAndGlyphs" fill="#424242" >20.</text>
<text x="291.0" y="973.0" font-size="12" text-anchor="middle" textLength="10.7" lengthAdjust="spacingAndGlyphs" fill="#424242" >0.</text>
<text x="328.0" y="973.0" font-size="12" text-anchor="middle" textLength="23.8" lengthAdjust="spacingAndGlyphs" fill="#424242" >-20.</text>
<text x="366.0" y="973.0" font-size="12" text-anchor="middle" textLength="23.8" lengthAdjust="spacingAndGlyphs" fill="#424242" >-40.</text>
<text x="290.5" y="991.3" font-size="12" text-anchor="middle" textLength="37.0" lengthAdjust="spacingAndGlyphs" fill="#424242" >KSM-X</text>
<text x="165.5" y="877.0" font-size="12" text-anchor="middle" textLength="37.0" lengthAdjust="spacingAndGlyphs" transform="rotate(-90 165.5 877.0)" fill="#424242" >KSM-Y</text>
<text x="495.5" y="807.9" font-size="12" text-anchor="end" textLength="18.4" lengthAdjust="spacingAndGlyphs" fill="#424242" >40.</text>
<text x="495.5" y="825.9" font-size="12" text-anchor="end" textLength="18.4" lengthAdjust="spacingAndGlyphs" fill="#424242" >30.</text>
<text x="495.5" y="843.9" font-size="12" text-anchor="end" textLength="18.4" lengthAdjust="spacingAndGlyphs" fill="#424242" >20.</text>
<text x="495.5" y="862.9" font-size="12" text-anchor="end" textLength="18.4" lengthAdjust="spacingAndGlyphs" fill="#424242" >10.</text>
<text x="495.5" y="880.9" font-size="12" text-anchor="end" textLength="10.7" lengthAdjust="spacingAndGlyphs" fill="#424242" >0.</text>
<text x="495.5" y="898.9" font-size="12" text-anchor="end" textLength="23.8" lengthAdjust="spacingAndGlyphs" fill="#424242" >-10.</text>
<text x="495.5" y="917.9" font-size="12" text-anchor="end" textLength="23.8" lengthAdjust="spacingAndGlyphs" fill="#424242" >-20.</text>
<text x="495.5" y="935.9" font-size="12" text-anchor="end" textLength="23.8" lengthAdjust="spacingAndGlyphs" fill="#424242" >-30.</text>
<text x="495.5" y="953.9" font-size="12" text-anchor="end" textLength="23.8" lengthAdjust="spacingAndGlyphs" fill="#424242" >-40.</text>
<text x="510.0" y="973.0" font-size="12" text-anchor="middle" textLength="18.4" lengthAdjust="spacingAndGlyphs" fill="#424242" >40.</text>
<text x="547.0" y="973.0" font-size="12" text-anchor="middle" textLength="18.4" lengthAdjust="spacingAndGlyphs" fill="#424242" >20.</text>
<text x="585.0" y="973.0" font-size="12" text-anchor="middle" textLength="10.7" lengthAdjust="spacingAndGlyphs" fill="#424242" >0.</text>
<text x="622.0" y="973.0" font-size="12" text-anchor="middle" textLength="23.8" lengthAdjust="spacingAndGlyphs" fill="#424242" >-20.</text>
<text x="660.0" y="973.0" font-size="12" text-anchor="middle" textLength="23.8" lengthAdjust="spacingAndGlyphs" fill="#424242" >-40.</text>
<text x="584.5" y="991.3" font-size="12" text-anchor="middle" textLength="37.0" lengthAdjust="spacingAndGlyphs" fill="#424242" >KSM-X</text>
<text x="459.5" y="877.0" font-size="12" text-anchor="middle" textLength="37.0" lengthAdjust="spacingAndGlyphs" transform="rotate(-90 459.5 877.0)" fill="#424242" >KSM-Z</text>
<text x="789.5" y="807.9" font-size="12" text-anchor="end" textLength="18.4" lengthAdjust="spacingAndGlyphs" fill="#424242" >40.</text>
<text x="789.5" y="825.9" font-size="12" text-anchor="end" textLength="18.4" lengthAdjust="spacingAndGlyphs" fill="#424242" >30.</text>
<text x="789.5" y="843.9" font-size="12" text-anchor="end" textLength="18.4" lengthAdjust="spacingAndGlyphs" fill="#424242" >20.</text>
<text x="789.5" y="862.9" font-size="12" text-anchor="end" textLength="18.4" lengthAdjust="spacingAndGlyphs" fill="#424242" >10.</text>
<text x="789.5" y="880.9" font-size="12" text-anchor="end" textLength="10.7" lengthAdjust="spacingAndGlyphs" fill="#424242" >0.</text>
<text x="789.5" y="898.9" font-size="12" text-anchor="end" textLength="23.8" lengthAdjust="spacingAndGlyphs" fill="#424242" >-10.</text>
<text x="789.5" y="917.9" font-size="12" text-anchor="end" textLength="23.8" lengthAdjust="spacingAndGlyphs" fill="#424242" >-20.</text>
<text x="789.5" y="935.9" font-size="12" text-anchor="end" textLength="23.8" lengthAdjust="spacingAndGlyphs" fill="#424242" >-30.</text>
<text x="789.5" y="953.9" font-size="12" text-anchor="end" textLength="23.8" lengthAdjust="spacingAndGlyphs" fill="#424242" >-40.</text>
<text x="804.0" y="973.0" font-size="12" text-anchor="middle" textLength="23.8" lengthAdjust="spacingAndGlyphs" fill="#424242" >-40.</text>
<text x="841.0" y="973.0" font-size="12" text-anchor="middle" textLength="23.8" lengthAdjust="spacingAndGlyphs" fill="#424242" >-20.</text>
<text x="879.0" y="973.0" font-size="12" text-anchor="middle" textLength="10.7" lengthAdjust="spacingAndGlyphs" fill="#424242" >0.</text>
<text x="916.0" y="973.0" font-size="12" text-anchor="middle" textLength="18.4" lengthAdjust="spacingAndGlyphs" fill="#424242" >20.</text>
<text x="954.0" y="973.0" font-size="12" text-anchor="middle" textLength="18.4" lengthAdjust="spacingAndGlyphs" fill="#424242" >40.</text>
<text x="878.5" y="991.3" font-size="12" text-anchor="middle" textLength="37.0" lengthAdjust="spacingAndGlyphs" fill="#424242" >KSM-Y</text>
<text x="753.5" y="877.0" font-size="12" text-anchor="middle" textLength="37.0" lengthAdjust="spacingAndGlyphs" transform="rotate(-90 753.5 877.0)" fill="#424242" >KSM-Z</text>
</g>
</svg></body></html>
